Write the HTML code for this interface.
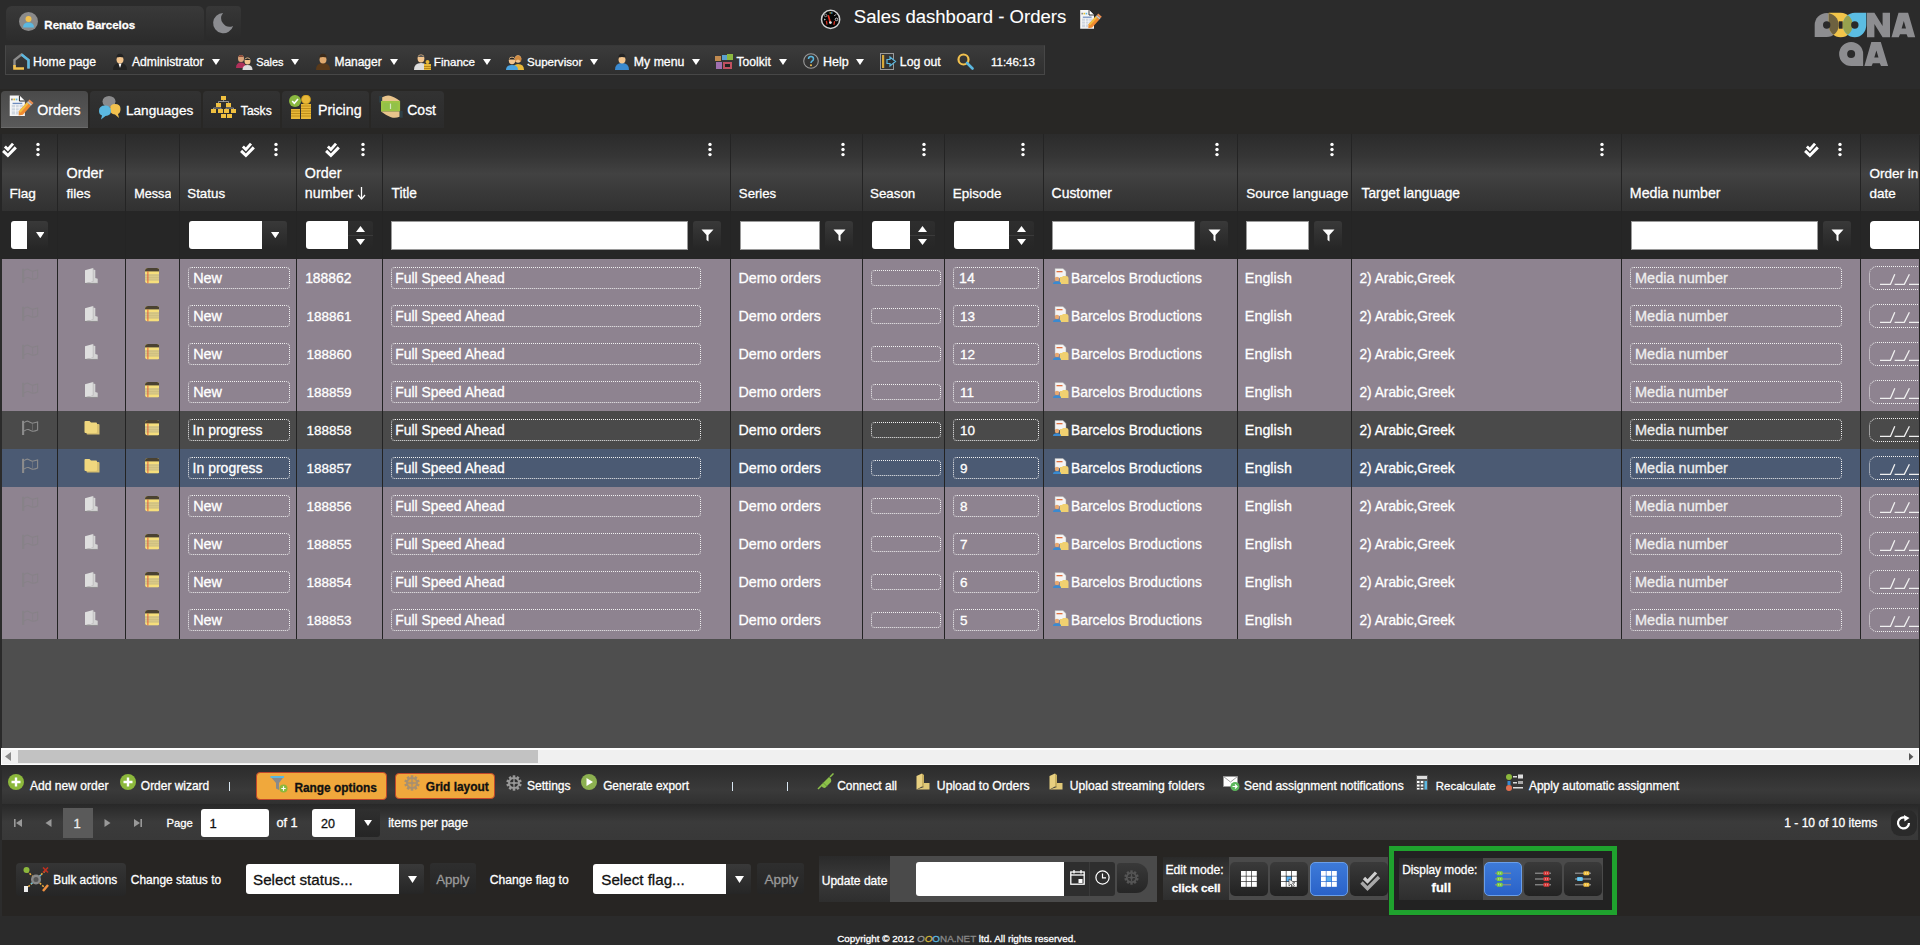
<!DOCTYPE html><html><head><meta charset="utf-8"><style>
*{margin:0;padding:0;box-sizing:border-box}
html,body{width:1920px;height:945px;overflow:hidden;background:#2b2b2b;font-family:"Liberation Sans",sans-serif}
.a{position:absolute}
.t{position:absolute;white-space:nowrap;line-height:1;-webkit-text-stroke:0.3px currentColor}
</style></head><body><div class="a" style="left:6px;top:6px;width:198px;height:35px;border-radius:6px 6px 3px 3px;background:linear-gradient(#393939,#2c2c2c)"></div>
<svg class="a" style="left:19px;top:12px" width="19" height="19" viewBox="0 0 19 19"><circle cx="9.5" cy="9.5" r="9.5" fill="#8a8a8a"/><circle cx="9.5" cy="7" r="3" fill="#f2c14e"/><path d="M4 15.5 Q4 10.5 9.5 10.5 Q15 10.5 15 15.5 Z" fill="#5bb8e0"/></svg>
<div class="t" style="left:44.37px;top:20.00px;font-size:11.529px;color:#fff;font-weight:bold;">Renato Barcelos</div>
<div class="a" style="left:206px;top:6px;width:35px;height:35px;border-radius:4px;background:linear-gradient(#373737,#2a2a2a)"></div>
<svg class="a" style="left:206px;top:6px" width="35" height="35" viewBox="0 0 35 35"><path d="M17.1 6.9 A10.2 10.2 0 1 0 27.1 20 A8.5 8.5 0 0 1 17.1 6.9 Z" fill="#8b8c90"/></svg>
<svg class="a" style="left:815px;top:5px" width="30" height="30" viewBox="0 0 30 30"><circle cx="15.6" cy="14.4" r="9.1" fill="#060606" stroke="#d2d2d2" stroke-width="1.5"/><path d="M13.2 10.3 L15.2 17.1" stroke="#ee3322" stroke-width="1.7"/><circle cx="15.4" cy="17.6" r="1.4" fill="#eaeaea"/><path d="M11.4 15.8 L12 19.6 M19.6 16.2 L18.9 19.8" stroke="#d83020" stroke-width="1.3"/><circle cx="10.6" cy="10.4" r="1.3" fill="none" stroke="#aaa" stroke-width=".8"/><path d="M19.3 11 L21 9.3" stroke="#ccc" stroke-width="1"/><circle cx="21.5" cy="14.4" r="1.3" fill="none" stroke="#ccc" stroke-width="1"/><path d="M9 13.5 L11 14.5 L9 15.5Z" fill="#bbb"/><rect x="14.6" y="7.2" width="1.2" height="1.5" fill="#c8a838"/><rect x="16.2" y="7.2" width="1.2" height="1.5" fill="#5bb8e0"/></svg>
<div class="t" style="left:853.85px;top:8.00px;font-size:18.557px;color:#fff;-webkit-text-stroke:0.1px #fff;">Sales dashboard - Orders</div>
<svg class="a" style="left:1075px;top:5px" width="30" height="30" viewBox="0 0 30 30"><path d="M5.2 5.1 H14 L19 10 V23.7 H5.2 Z" fill="#f6f6f6"/><path d="M14 5.1 V10 H19" fill="#fff" stroke="#222" stroke-width=".9"/><rect x="6.4" y="7.8" width="1.6" height="1.6" fill="#888"/><rect x="8.5" y="7.8" width="1.6" height="1.6" fill="#e8c030"/><rect x="10.6" y="7.8" width="1.6" height="1.6" fill="#5bb8e0"/><rect x="7.8" y="11.6" width="8.8" height="1.2" fill="#4a70b0" opacity=".8"/><rect x="7" y="13.5" width="10.5" height="8.8" fill="#cfd6e0"/><path d="M7 16.2H17.5M7 19H17.5M10.5 13.5V22.3M13.8 13.5V22.3" stroke="#fafafa" stroke-width=".7"/><path d="M13.6 19.3 L20.8 11.2 L24.4 14.4 L17.2 22.5 L13.3 23.2 Z" fill="#f08a30"/><path d="M13.6 19.3 L20.8 11.2 L22.3 12.5 L15 20.6Z" fill="#f2c040"/><path d="M20.8 11.2 L22 9.9 L25.6 13.1 L24.4 14.4Z" fill="#c8c8c8"/><path d="M22 9.9 L23.2 8.6 L26.8 11.8 L25.6 13.1Z" fill="#f09050"/></svg>
<svg class="a" style="left:1800px;top:5px" width="120" height="70" viewBox="0 0 120 70"><defs>
<clipPath id="cg"><path d="M14.7,20 A12,12 0 0 1 26.7,8 A12,12 0 0 1 38.7,20 A12,12 0 0 1 26.7,32 L14.7,32 Z"/></clipPath>
<clipPath id="cb"><path d="M54.8,8 L66.3,8 L66.3,20 A11.5 12 0 0 1 54.8,32 A12 12 0 0 1 42.8,20 A12 12 0 0 1 54.8,8 Z"/></clipPath>
</defs>
<g fill="#8d8d90">
<path d="M14.7,20 A12,12 0 0 1 26.7,8 A12,12 0 0 1 38.7,20 A12,12 0 0 1 26.7,32 L14.7,32 Z"/>
<path d="M67,7.8 H74.4 L82.6,21 V7.8 H90 V32.2 H82.6 L74.4,19 V32.2 H67 Z"/>
<path d="M91.5,32.2 L98.5,7.8 H108.1 L115.2,32.2 H107.8 L106.6,29.3 H100 L98.8,32.2 Z M101.6,23.5 H106 L103.8,16 Z"/>
<path d="M51.15,37 A12 12 0 0 1 63.15,49 L63.15,61.1 L51.15,61.1 A12 12 0 0 1 39.15,49 A12 12 0 0 1 51.15,37Z"/>
<path d="M64.4,61.1 L71.3,37 H80.8 L88.1,61.1 H81 L79.8,58.2 H72.8 L71.6,61.1 Z M74.3,52.6 H78.5 L76.4,45.5 Z"/>
</g>
<path id="yo" d="M28.7,7.8 L40.7,7.8 A12 12.2 0 0 1 52.7,20 A12 12.2 0 0 1 40.7,32.2 A12 12.2 0 0 1 28.7,20 Z" fill="#f2c54a"/>
<path d="M54.8,7.8 L66.3,7.8 L66.3,20 A11.5 12.2 0 0 1 54.8,32.2 A12 12.2 0 0 1 42.8,20 A12 12.2 0 0 1 54.8,7.8 Z" fill="#5bbde3"/>
<g clip-path="url(#cg)"><path d="M28.7,7.8 L40.7,7.8 A12 12.2 0 0 1 52.7,20 A12 12.2 0 0 1 40.7,32.2 A12 12.2 0 0 1 28.7,20 Z" fill="#6d6140"/></g>
<g clip-path="url(#cb)"><path d="M28.7,7.8 L40.7,7.8 A12 12.2 0 0 1 52.7,20 A12 12.2 0 0 1 40.7,32.2 A12 12.2 0 0 1 28.7,20 Z" fill="#97a24e"/></g>
<circle cx="26.7" cy="20" r="3.7" fill="#2a2a2a"/>
<rect x="38.8" y="16.3" width="3.8" height="7.4" fill="#2a2a2a"/>
<circle cx="54.8" cy="20" r="3.7" fill="#2a2a2a"/>
<circle cx="51.15" cy="49" r="4" fill="#2a2a2a"/>
</svg>
<div class="a" style="left:5px;top:45px;width:1040px;height:30px;background:linear-gradient(#3b3b3b,#2f2f2f);border:1px solid #474747;border-top-color:#383838"></div>
<svg class="a" style="left:13px;top:53px" width="17" height="17" viewBox="0 0 17 17"><path d="M1.5 15.5 V7 L8.5 1.5 L15.5 7 V15.5" fill="none" stroke="#8c8c8c" stroke-width="2.4"/><path d="M8.5 1.5 L15.5 7 V15.5" fill="none" stroke="#5bb8e0" stroke-width="2.4"/><path d="M1.5 12 V15.5 H11" fill="none" stroke="#f2c14e" stroke-width="2.6"/></svg>
<div class="t" style="left:33.00px;top:56.00px;font-size:12.197px;color:#fff;">Home page</div>
<svg class="a" style="left:112px;top:53px" width="16" height="17" viewBox="0 0 16 17"><path d="M1 17 Q1 10 8 10 Q15 10 15 17 Z" fill="#222"/><path d="M6.5 10.5 L8 15 L9.5 10.5 Z" fill="#fff"/><ellipse cx="8" cy="6.3" rx="3.5" ry="4.3" fill="#f2c48d"/><path d="M4.3 6.5 Q3.8 0.8 8 0.8 Q12.2 0.8 11.7 6.5 L11.2 4.6 Q8 3.6 4.8 4.6 Z" fill="#222"/></svg>
<div class="t" style="left:132.00px;top:56.00px;font-size:12.169px;color:#fff;">Administrator</div>
<svg class="a" style="left:212px;top:58.5px" width="8" height="6" viewBox="0 0 8 6"><path d="M0 0 H8 L4.0 6 Z" fill="#fff"/></svg>
<svg class="a" style="left:236px;top:54px" width="17" height="16" viewBox="0 0 17 16"><ellipse cx="5" cy="4.5" rx="3" ry="3.5" fill="#d9a37a"/><path d="M2 3 Q5 -1 8 3" fill="#8a4a3a"/><path d="M0 14 Q0 8.5 5 8.5 Q10 8.5 10 14Z" fill="#b0305a"/><ellipse cx="11.5" cy="7" rx="3" ry="3.5" fill="#f2c48d"/><path d="M8.5 6 Q11.5 2.5 14.5 6" fill="#222"/><path d="M6.5 16 Q6.5 11 11.5 11 Q16.5 11 16.5 16Z" fill="#ddd"/></svg>
<div class="t" style="left:256.15px;top:57.00px;font-size:10.915px;color:#fff;">Sales</div>
<svg class="a" style="left:291px;top:58.5px" width="8" height="6" viewBox="0 0 8 6"><path d="M0 0 H8 L4.0 6 Z" fill="#fff"/></svg>
<svg class="a" style="left:315px;top:53px" width="16" height="17" viewBox="0 0 16 17"><path d="M1 17 Q1 10 8 10 Q15 10 15 17 Z" fill="#5a3a1a"/><path d="M6.5 10.5 L8 15 L9.5 10.5 Z" fill="#5a3a1a"/><ellipse cx="8" cy="6.3" rx="3.5" ry="4.3" fill="#e0a96e"/><path d="M4.3 6.5 Q3.8 0.8 8 0.8 Q12.2 0.8 11.7 6.5 L11.2 4.6 Q8 3.6 4.8 4.6 Z" fill="#3a2a1a"/></svg>
<div class="t" style="left:334.43px;top:57.00px;font-size:11.971px;color:#fff;">Manager</div>
<svg class="a" style="left:390px;top:58.5px" width="8" height="6" viewBox="0 0 8 6"><path d="M0 0 H8 L4.0 6 Z" fill="#fff"/></svg>
<svg class="a" style="left:414px;top:53px" width="17" height="17" viewBox="0 0 17 17"><ellipse cx="7" cy="5.5" rx="3.4" ry="4" fill="#f2c48d"/><path d="M3.6 4 Q7 0 10.4 4" fill="#555"/><path d="M0 17 Q0 10 7 10 Q11 10 12 12 V17Z" fill="#ddd"/><rect x="10" y="11" width="7" height="6" fill="#e8b838"/><rect x="10" y="13" width="7" height="1" fill="#b88818"/><rect x="10" y="15" width="7" height="1" fill="#b88818"/><circle cx="13.5" cy="9" r="2" fill="#e8b838"/></svg>
<div class="t" style="left:433.86px;top:57.00px;font-size:11.580px;color:#fff;">Finance</div>
<svg class="a" style="left:483px;top:58.5px" width="8" height="6" viewBox="0 0 8 6"><path d="M0 0 H8 L4.0 6 Z" fill="#fff"/></svg>
<svg class="a" style="left:506px;top:54px" width="18" height="16" viewBox="0 0 18 16"><ellipse cx="12" cy="5" rx="3.2" ry="3.8" fill="#f2c48d"/><path d="M8.5 4 Q12 -1 15.5 4 L15 8 Q12 3 9 8Z" fill="#d08a40"/><path d="M7 16 Q7 10 12 10 Q18 10 18 16Z" fill="#e8b838"/><ellipse cx="6" cy="6.5" rx="3.2" ry="3.8" fill="#f2c48d"/><path d="M2.8 5.5 Q6 1.5 9.2 5.5" fill="#222"/><path d="M0 16 Q0 11 6 11 Q12 11 12 16Z" fill="#4aa3df"/></svg>
<div class="t" style="left:527.00px;top:57.00px;font-size:11.579px;color:#fff;">Supervisor</div>
<svg class="a" style="left:590px;top:58.5px" width="8" height="6" viewBox="0 0 8 6"><path d="M0 0 H8 L4.0 6 Z" fill="#fff"/></svg>
<svg class="a" style="left:614px;top:53px" width="16" height="17" viewBox="0 0 16 17"><path d="M1 17 Q1 10 8 10 Q15 10 15 17 Z" fill="#3a8ad0"/><path d="M6.5 10.5 L8 15 L9.5 10.5 Z" fill="#3a8ad0"/><ellipse cx="8" cy="6.3" rx="3.5" ry="4.3" fill="#f2c48d"/><path d="M4.3 6.5 Q3.8 0.8 8 0.8 Q12.2 0.8 11.7 6.5 L11.2 4.6 Q8 3.6 4.8 4.6 Z" fill="#222"/></svg>
<div class="t" style="left:633.87px;top:56.00px;font-size:12.292px;color:#fff;">My menu</div>
<svg class="a" style="left:692px;top:58.5px" width="8" height="6" viewBox="0 0 8 6"><path d="M0 0 H8 L4.0 6 Z" fill="#fff"/></svg>
<svg class="a" style="left:715px;top:54px" width="18" height="16" viewBox="0 0 18 16"><rect x="0" y="2" width="6" height="5" fill="#c08a50"/><rect x="7" y="1" width="5" height="5" fill="#5aa0d0"/><rect x="12" y="0" width="6" height="6" fill="#8ab840"/><rect x="1" y="8" width="6" height="7" fill="#a070b0"/><rect x="8" y="8" width="9" height="7" fill="#c05060"/><rect x="10" y="10" width="5" height="3" fill="#222"/></svg>
<div class="t" style="left:736.58px;top:56.00px;font-size:12.091px;color:#fff;">Toolkit</div>
<svg class="a" style="left:779px;top:58.5px" width="8" height="6" viewBox="0 0 8 6"><path d="M0 0 H8 L4.0 6 Z" fill="#fff"/></svg>
<svg class="a" style="left:803px;top:53px" width="16" height="16" viewBox="0 0 16 16"><circle cx="8" cy="8" r="7.3" fill="none" stroke="#9a9a9a" stroke-width="1.1"/><path d="M5.5 6 Q5.5 3.5 8 3.5 Q10.5 3.5 10.5 6 Q10.5 7.5 8.8 8.3 Q8 8.8 8 10" fill="none" stroke="#5bb8e0" stroke-width="1.5"/><circle cx="8" cy="12.3" r="1" fill="#f2c14e"/></svg>
<div class="t" style="left:823.00px;top:56.00px;font-size:12.522px;color:#fff;">Help</div>
<svg class="a" style="left:856px;top:58.5px" width="8" height="6" viewBox="0 0 8 6"><path d="M0 0 H8 L4.0 6 Z" fill="#fff"/></svg>
<svg class="a" style="left:880px;top:53px" width="17" height="17" viewBox="0 0 17 17"><rect x="0.5" y="0.5" width="13" height="16" fill="none" stroke="#9a9a9a" stroke-width="1"/><rect x="2" y="2" width="2.2" height="13" fill="#d8a838"/><path d="M7 6.5 H10 V4 L15.5 8.5 L10 13 V10.5 H7 Z" fill="#2a2a2a" stroke="#5bb8e0" stroke-width="1.2"/></svg>
<div class="t" style="left:899.87px;top:56.00px;font-size:12.253px;color:#fff;">Log out</div>
<svg class="a" style="left:957px;top:53px" width="17" height="17" viewBox="0 0 17 17"><circle cx="6.5" cy="6.5" r="5" fill="none" stroke="#f2c14e" stroke-width="2.2"/><path d="M10 10 L15.5 15.5" stroke="#5bb8e0" stroke-width="2.6" stroke-linecap="round"/></svg>
<div class="t" style="left:991.00px;top:57.00px;font-size:11.486px;color:#fff;">11:46:13</div>
<div class="a" style="left:0px;top:89px;width:1920px;height:46px;background:#282725"></div>
<div class="a" style="left:1px;top:91px;width:87.2px;height:37px;border-radius:4px 4px 0 0;background:linear-gradient(#4a4a4a,#5a5a5a)"></div>
<div class="a" style="left:1px;top:127.2px;width:87.2px;height:1.3px;background:#6a6a6a"></div>
<div class="a" style="left:90px;top:91px;width:111px;height:36.5px;border-radius:4px 4px 0 0;background:linear-gradient(#323232,#2b2b2b)"></div>
<div class="a" style="left:203px;top:91px;width:77px;height:36.5px;border-radius:4px 4px 0 0;background:linear-gradient(#323232,#2b2b2b)"></div>
<div class="a" style="left:282px;top:91px;width:87px;height:36.5px;border-radius:4px 4px 0 0;background:linear-gradient(#323232,#2b2b2b)"></div>
<div class="a" style="left:371px;top:91px;width:73px;height:36.5px;border-radius:4px 4px 0 0;background:linear-gradient(#323232,#2b2b2b)"></div>
<svg class="a" style="left:3.6px;top:90px" width="33" height="33" viewBox="0 0 30 30"><path d="M5.2 5.1 H14 L19 10 V23.7 H5.2 Z" fill="#f6f6f6"/><path d="M14 5.1 V10 H19" fill="#fff" stroke="#222" stroke-width=".9"/><rect x="6.4" y="7.8" width="1.6" height="1.6" fill="#888"/><rect x="8.5" y="7.8" width="1.6" height="1.6" fill="#e8c030"/><rect x="10.6" y="7.8" width="1.6" height="1.6" fill="#5bb8e0"/><rect x="7.8" y="11.6" width="8.8" height="1.2" fill="#4a70b0" opacity=".8"/><rect x="7" y="13.5" width="10.5" height="8.8" fill="#cfd6e0"/><path d="M7 16.2H17.5M7 19H17.5M10.5 13.5V22.3M13.8 13.5V22.3" stroke="#fafafa" stroke-width=".7"/><path d="M13.6 19.3 L20.8 11.2 L24.4 14.4 L17.2 22.5 L13.3 23.2 Z" fill="#f08a30"/><path d="M13.6 19.3 L20.8 11.2 L22.3 12.5 L15 20.6Z" fill="#f2c040"/><path d="M20.8 11.2 L22 9.9 L25.6 13.1 L24.4 14.4Z" fill="#c8c8c8"/><path d="M22 9.9 L23.2 8.6 L26.8 11.8 L25.6 13.1Z" fill="#f09050"/></svg>
<div class="t" style="left:37.30px;top:103.00px;font-size:14.170px;color:#fff;">Orders</div>
<svg class="a" style="left:98px;top:95px" width="24" height="25" viewBox="0 0 24 25"><ellipse cx="11" cy="6.5" rx="6.5" ry="5.5" fill="#8a8a8c"/><path d="M12 14 Q12 9 17 9 Q22.5 9 22.5 14 Q22.5 18 20 19 L21 23 L17 19.5 Q12 19 12 14Z" fill="#f2c14e"/><path d="M1 16 Q1 10.5 7 10.5 Q13 10.5 13 16 Q13 20.5 7.5 21 L3 24.5 L4 20.5 Q1 19.5 1 16Z" fill="#5bb8e0"/></svg>
<div class="t" style="left:126.00px;top:104.00px;font-size:13.600px;color:#fff;">Languages</div>
<svg class="a" style="left:211px;top:96px" width="25" height="22" viewBox="0 0 25 22"><g fill="#f0c040"><rect x="10" y="0" width="5" height="4"/><rect x="5" y="7" width="5" height="4"/><rect x="15" y="7" width="5" height="4"/><rect x="0" y="13" width="5" height="4"/><rect x="7" y="13" width="5" height="4"/><rect x="13" y="13" width="5" height="4"/><rect x="20" y="13" width="5" height="4"/><rect x="10" y="18" width="5" height="4"/><rect x="16" y="18" width="5" height="4"/></g><path d="M12.5 4V5.5M7.5 5.5H17.5M7.5 5.5V7M17.5 5.5V7M2.5 12H10M2.5 12V13M10 12V13M15 12H22.5M15 12V13M22.5 12V13" stroke="#aaa" stroke-width=".8" fill="none"/></svg>
<div class="t" style="left:240.86px;top:105.00px;font-size:12.056px;color:#fff;">Tasks</div>
<svg class="a" style="left:289px;top:95px" width="23" height="24" viewBox="0 0 23 24"><g fill="#e8b838"><rect x="2" y="14" width="9" height="10"/><rect x="12" y="9" width="10" height="15"/></g><g stroke="#b88818" stroke-width=".9"><path d="M2 16H11M2 18.5H11M2 21H11M12 11H22M12 13.5H22M12 16H22M12 18.5H22M12 21H22"/></g><circle cx="6" cy="6" r="6" fill="#8ab840"/><path d="M3.2 6 L5.3 8.2 L9 4" stroke="#fff" stroke-width="1.6" fill="none"/><circle cx="17" cy="4.5" r="4.5" fill="#e8b838" stroke="#c89818" stroke-width=".8"/></svg>
<div class="t" style="left:318.00px;top:103.00px;font-size:14.280px;color:#fff;">Pricing</div>
<svg class="a" style="left:370px;top:88px" width="40" height="36" viewBox="0 0 40 36"><rect x="9.1" y="8" width="3.1" height="6.5" fill="#2e4048"/><path d="M12.2 9.2 Q17 6.8 20 7.8 Q24 8.8 30 13 H12.2 Z" fill="#e8c48c"/><rect x="11" y="13" width="19.1" height="10.6" fill="#9cc444"/><rect x="13.5" y="15" width="14" height="6.6" fill="#8cc04c" opacity=".6"/><path d="M20.5 15.6 V21" stroke="#d8e8c0" stroke-width="1.2"/><path d="M11 23.6 H29.7 V28.8 Q25 30.6 21 29.2 Q16 27.6 11 23.6 Z" fill="#e8c48c"/><rect x="29.7" y="22.9" width="3" height="6.8" fill="#2e4048"/></svg>
<div class="t" style="left:407.29px;top:104.00px;font-size:13.971px;color:#fff;">Cost</div>
<div class="a" style="left:0px;top:134px;width:1920px;height:77px;background:linear-gradient(#2b2b2b 0%,#363636 30%,#424242 52%,#3a3a3a 72%,#313131 100%)"></div>
<div class="a" style="left:0px;top:211px;width:1920px;height:48px;background:#262626"></div>
<div class="a" style="left:57px;top:134px;width:1px;height:125px;background:#242424"></div>
<div class="a" style="left:125px;top:134px;width:1px;height:125px;background:#242424"></div>
<div class="a" style="left:179px;top:134px;width:1px;height:125px;background:#242424"></div>
<div class="a" style="left:296px;top:134px;width:1px;height:125px;background:#242424"></div>
<div class="a" style="left:382px;top:134px;width:1px;height:125px;background:#242424"></div>
<div class="a" style="left:730px;top:134px;width:1px;height:125px;background:#242424"></div>
<div class="a" style="left:862px;top:134px;width:1px;height:125px;background:#242424"></div>
<div class="a" style="left:944px;top:134px;width:1px;height:125px;background:#242424"></div>
<div class="a" style="left:1043px;top:134px;width:1px;height:125px;background:#242424"></div>
<div class="a" style="left:1237px;top:134px;width:1px;height:125px;background:#242424"></div>
<div class="a" style="left:1351px;top:134px;width:1px;height:125px;background:#242424"></div>
<div class="a" style="left:1621px;top:134px;width:1px;height:125px;background:#242424"></div>
<div class="a" style="left:1860px;top:134px;width:1px;height:125px;background:#242424"></div>
<div class="a" style="left:0px;top:134px;width:1.5px;height:125px;background:#262626"></div>
<div class="t" style="left:9.44px;top:187.00px;font-size:13.640px;color:#fff;">Flag</div>
<div class="t" style="left:66.57px;top:166.00px;font-size:14.352px;color:#fff;">Order</div>
<div class="t" style="left:66.57px;top:187.00px;font-size:13.547px;color:#fff;">files</div>
<div class="a" style="left:134px;top:130px;width:37px;height:80px;overflow:hidden">
<div class="t" style="left:0.30px;top:58.00px;font-size:12.600px;color:#fff;">Message</div>
</div>
<div class="t" style="left:187.28px;top:187.00px;font-size:13.333px;color:#fff;">Status</div>
<div class="t" style="left:304.86px;top:166.00px;font-size:14.305px;color:#fff;">Order</div>
<div class="t" style="left:304.86px;top:186.00px;font-size:14.247px;color:#fff;">number</div>
<svg class="a" style="left:357px;top:187px" width="9" height="13" viewBox="0 0 9 13"><path d="M4.5 0 V11" stroke="#fff" stroke-width="1.3"/><path d="M1 8 L4.5 12 L8 8" stroke="#fff" stroke-width="1.3" fill="none"/></svg>
<div class="t" style="left:391.61px;top:187.00px;font-size:13.713px;color:#fff;">Title</div>
<div class="t" style="left:738.86px;top:187.00px;font-size:13.168px;color:#fff;">Series</div>
<div class="t" style="left:870.00px;top:187.00px;font-size:13.343px;color:#fff;">Season</div>
<div class="t" style="left:952.86px;top:187.00px;font-size:13.430px;color:#fff;">Episode</div>
<div class="t" style="left:1051.61px;top:187.00px;font-size:13.912px;color:#fff;">Customer</div>
<div class="a" style="left:1240px;top:170px;width:111px;height:40px;overflow:hidden">
<div class="t" style="left:6.30px;top:17.00px;font-size:13.500px;color:#fff;">Source language</div>
</div>
<div class="t" style="left:1361.61px;top:187.00px;font-size:13.716px;color:#fff;">Target language</div>
<div class="t" style="left:1629.85px;top:186.00px;font-size:14.197px;color:#fff;">Media number</div>
<div class="t" style="left:1869.50px;top:167.00px;font-size:13.500px;color:#fff;">Order in</div>
<div class="t" style="left:1869.50px;top:187.00px;font-size:13.500px;color:#fff;">date</div>
<svg class="a" style="left:-2.2px;top:138px" width="24" height="24" viewBox="0 0 24 24"><path d="M5.1 12.9 L9.9 17.5 L17.8 9.4" fill="none" stroke="#fff" stroke-width="3"/><path d="M6.9 8.4 L9.9 11.4 L15 5.6" fill="none" stroke="#fff" stroke-width="2.8"/></svg>
<svg class="a" style="left:236px;top:138px" width="24" height="24" viewBox="0 0 24 24"><path d="M5.1 12.9 L9.9 17.5 L17.8 9.4" fill="none" stroke="#fff" stroke-width="3"/><path d="M6.9 8.4 L9.9 11.4 L15 5.6" fill="none" stroke="#fff" stroke-width="2.8"/></svg>
<svg class="a" style="left:320.9px;top:138px" width="24" height="24" viewBox="0 0 24 24"><path d="M5.1 12.9 L9.9 17.5 L17.8 9.4" fill="none" stroke="#fff" stroke-width="3"/><path d="M6.9 8.4 L9.9 11.4 L15 5.6" fill="none" stroke="#fff" stroke-width="2.8"/></svg>
<svg class="a" style="left:1799.6px;top:138px" width="24" height="24" viewBox="0 0 24 24"><path d="M5.1 12.9 L9.9 17.5 L17.8 9.4" fill="none" stroke="#fff" stroke-width="3"/><path d="M6.9 8.4 L9.9 11.4 L15 5.6" fill="none" stroke="#fff" stroke-width="2.8"/></svg>
<svg class="a" style="left:35.5px;top:142px" width="4" height="15" viewBox="0 0 4 15"><circle cx="2" cy="2.4" r="1.7" fill="#fff"/><circle cx="2" cy="7.5" r="1.7" fill="#fff"/><circle cx="2" cy="12.6" r="1.7" fill="#fff"/></svg>
<svg class="a" style="left:274.4px;top:142px" width="4" height="15" viewBox="0 0 4 15"><circle cx="2" cy="2.4" r="1.7" fill="#fff"/><circle cx="2" cy="7.5" r="1.7" fill="#fff"/><circle cx="2" cy="12.6" r="1.7" fill="#fff"/></svg>
<svg class="a" style="left:360.6px;top:142px" width="4" height="15" viewBox="0 0 4 15"><circle cx="2" cy="2.4" r="1.7" fill="#fff"/><circle cx="2" cy="7.5" r="1.7" fill="#fff"/><circle cx="2" cy="12.6" r="1.7" fill="#fff"/></svg>
<svg class="a" style="left:708.4px;top:142px" width="4" height="15" viewBox="0 0 4 15"><circle cx="2" cy="2.4" r="1.7" fill="#fff"/><circle cx="2" cy="7.5" r="1.7" fill="#fff"/><circle cx="2" cy="12.6" r="1.7" fill="#fff"/></svg>
<svg class="a" style="left:840.5px;top:142px" width="4" height="15" viewBox="0 0 4 15"><circle cx="2" cy="2.4" r="1.7" fill="#fff"/><circle cx="2" cy="7.5" r="1.7" fill="#fff"/><circle cx="2" cy="12.6" r="1.7" fill="#fff"/></svg>
<svg class="a" style="left:922.4px;top:142px" width="4" height="15" viewBox="0 0 4 15"><circle cx="2" cy="2.4" r="1.7" fill="#fff"/><circle cx="2" cy="7.5" r="1.7" fill="#fff"/><circle cx="2" cy="12.6" r="1.7" fill="#fff"/></svg>
<svg class="a" style="left:1021.4px;top:142px" width="4" height="15" viewBox="0 0 4 15"><circle cx="2" cy="2.4" r="1.7" fill="#fff"/><circle cx="2" cy="7.5" r="1.7" fill="#fff"/><circle cx="2" cy="12.6" r="1.7" fill="#fff"/></svg>
<svg class="a" style="left:1215.3px;top:142px" width="4" height="15" viewBox="0 0 4 15"><circle cx="2" cy="2.4" r="1.7" fill="#fff"/><circle cx="2" cy="7.5" r="1.7" fill="#fff"/><circle cx="2" cy="12.6" r="1.7" fill="#fff"/></svg>
<svg class="a" style="left:1329.5px;top:142px" width="4" height="15" viewBox="0 0 4 15"><circle cx="2" cy="2.4" r="1.7" fill="#fff"/><circle cx="2" cy="7.5" r="1.7" fill="#fff"/><circle cx="2" cy="12.6" r="1.7" fill="#fff"/></svg>
<svg class="a" style="left:1599.6px;top:142px" width="4" height="15" viewBox="0 0 4 15"><circle cx="2" cy="2.4" r="1.7" fill="#fff"/><circle cx="2" cy="7.5" r="1.7" fill="#fff"/><circle cx="2" cy="12.6" r="1.7" fill="#fff"/></svg>
<svg class="a" style="left:1838.3px;top:142px" width="4" height="15" viewBox="0 0 4 15"><circle cx="2" cy="2.4" r="1.7" fill="#fff"/><circle cx="2" cy="7.5" r="1.7" fill="#fff"/><circle cx="2" cy="12.6" r="1.7" fill="#fff"/></svg>
<div class="a" style="left:10.7px;top:221px;width:16.3px;height:28px;background:#fff;border-radius:3px 0 0 3px"></div>
<div class="a" style="left:27px;top:221px;width:21px;height:28px;background:linear-gradient(#393939,#262626);border-radius:0 3px 3px 0"></div>
<svg class="a" style="left:35.6px;top:232px" width="8.6" height="6.2" viewBox="0 0 8.6 6.2"><path d="M0 0 H8.6 L4.3 6.2 Z" fill="#fff"/></svg>
<div class="a" style="left:189px;top:221px;width:73px;height:28px;background:#fff;border-radius:3px 0 0 3px"></div>
<div class="a" style="left:262px;top:221px;width:25px;height:28px;background:linear-gradient(#393939,#262626);border-radius:0 3px 3px 0"></div>
<svg class="a" style="left:270.8px;top:232px" width="8.6" height="6.2" viewBox="0 0 8.6 6.2"><path d="M0 0 H8.6 L4.3 6.2 Z" fill="#fff"/></svg>
<div class="a" style="left:306px;top:221px;width:42px;height:28px;background:#fff;border-radius:3px 0 0 3px"></div>
<div class="a" style="left:348px;top:221px;width:25px;height:28px;background:linear-gradient(#2e2e2e,#262626);border-radius:0 3px 3px 0"></div>
<div class="a" style="left:348px;top:235px;width:25px;height:1px;background:#3a3a3a"></div>
<svg class="a" style="left:356.0px;top:226px" width="9" height="6" viewBox="0 0 9 6"><path d="M0 6 H9 L4.5 0 Z" fill="#fff"/></svg>
<svg class="a" style="left:356.0px;top:238.5px" width="9" height="6" viewBox="0 0 9 6"><path d="M0 0 H9 L4.5 6 Z" fill="#fff"/></svg>
<div class="a" style="left:391px;top:220.5px;width:297px;height:29px;background:#fff;border:1px solid #9a9a9a"></div>
<div class="a" style="left:693px;top:221px;width:28px;height:28px;background:linear-gradient(#393939,#262626);border-radius:3px"></div>
<svg class="a" style="left:700.5px;top:229px" width="13" height="13" viewBox="0 0 13 13"><path d="M0.5 0.5 H12.5 L7.5 6 V12.5 L5.5 11 V6 Z" fill="#fff"/></svg>
<div class="a" style="left:739.6px;top:220.5px;width:80.0px;height:29px;background:#fff;border:1px solid #9a9a9a"></div>
<div class="a" style="left:825px;top:221px;width:28px;height:28px;background:linear-gradient(#393939,#262626);border-radius:3px"></div>
<svg class="a" style="left:832.5px;top:229px" width="13" height="13" viewBox="0 0 13 13"><path d="M0.5 0.5 H12.5 L7.5 6 V12.5 L5.5 11 V6 Z" fill="#fff"/></svg>
<div class="a" style="left:872px;top:221px;width:38px;height:28px;background:#fff;border-radius:3px 0 0 3px"></div>
<div class="a" style="left:910px;top:221px;width:25px;height:28px;background:linear-gradient(#2e2e2e,#262626);border-radius:0 3px 3px 0"></div>
<div class="a" style="left:910px;top:235px;width:25px;height:1px;background:#3a3a3a"></div>
<svg class="a" style="left:918.0px;top:226px" width="9" height="6" viewBox="0 0 9 6"><path d="M0 6 H9 L4.5 0 Z" fill="#fff"/></svg>
<svg class="a" style="left:918.0px;top:238.5px" width="9" height="6" viewBox="0 0 9 6"><path d="M0 0 H9 L4.5 6 Z" fill="#fff"/></svg>
<div class="a" style="left:953.6px;top:221px;width:55.39999999999998px;height:28px;background:#fff;border-radius:3px 0 0 3px"></div>
<div class="a" style="left:1009px;top:221px;width:25px;height:28px;background:linear-gradient(#2e2e2e,#262626);border-radius:0 3px 3px 0"></div>
<div class="a" style="left:1009px;top:235px;width:25px;height:1px;background:#3a3a3a"></div>
<svg class="a" style="left:1017.0px;top:226px" width="9" height="6" viewBox="0 0 9 6"><path d="M0 6 H9 L4.5 0 Z" fill="#fff"/></svg>
<svg class="a" style="left:1017.0px;top:238.5px" width="9" height="6" viewBox="0 0 9 6"><path d="M0 0 H9 L4.5 6 Z" fill="#fff"/></svg>
<div class="a" style="left:1052px;top:220.5px;width:143px;height:29px;background:#fff;border:1px solid #9a9a9a"></div>
<div class="a" style="left:1200px;top:221px;width:28px;height:28px;background:linear-gradient(#393939,#262626);border-radius:3px"></div>
<svg class="a" style="left:1207.5px;top:229px" width="13" height="13" viewBox="0 0 13 13"><path d="M0.5 0.5 H12.5 L7.5 6 V12.5 L5.5 11 V6 Z" fill="#fff"/></svg>
<div class="a" style="left:1246.3px;top:220.5px;width:62.700000000000045px;height:29px;background:#fff;border:1px solid #9a9a9a"></div>
<div class="a" style="left:1314px;top:221px;width:28px;height:28px;background:linear-gradient(#393939,#262626);border-radius:3px"></div>
<svg class="a" style="left:1321.5px;top:229px" width="13" height="13" viewBox="0 0 13 13"><path d="M0.5 0.5 H12.5 L7.5 6 V12.5 L5.5 11 V6 Z" fill="#fff"/></svg>
<div class="a" style="left:1630.5px;top:220.5px;width:187.0999999999999px;height:29px;background:#fff;border:1px solid #9a9a9a"></div>
<div class="a" style="left:1823px;top:221px;width:28px;height:28px;background:linear-gradient(#393939,#262626);border-radius:3px"></div>
<svg class="a" style="left:1830.5px;top:229px" width="13" height="13" viewBox="0 0 13 13"><path d="M0.5 0.5 H12.5 L7.5 6 V12.5 L5.5 11 V6 Z" fill="#fff"/></svg>
<div class="a" style="left:1869.5px;top:221px;width:60px;height:28px;background:#fff;border-radius:4px 0 0 4px"></div>
<div class="a" style="left:1.5px;top:259px;width:1918px;height:38px;background:#8e8390"></div>
<div class="a" style="left:57px;top:259px;width:1px;height:38px;background:#232323"></div>
<div class="a" style="left:125px;top:259px;width:1px;height:38px;background:#232323"></div>
<div class="a" style="left:179px;top:259px;width:1px;height:38px;background:#232323"></div>
<div class="a" style="left:296px;top:259px;width:1px;height:38px;background:#232323"></div>
<div class="a" style="left:382px;top:259px;width:1px;height:38px;background:#232323"></div>
<div class="a" style="left:730px;top:259px;width:1px;height:38px;background:#232323"></div>
<div class="a" style="left:862px;top:259px;width:1px;height:38px;background:#232323"></div>
<div class="a" style="left:944px;top:259px;width:1px;height:38px;background:#232323"></div>
<div class="a" style="left:1043px;top:259px;width:1px;height:38px;background:#232323"></div>
<div class="a" style="left:1237px;top:259px;width:1px;height:38px;background:#232323"></div>
<div class="a" style="left:1351px;top:259px;width:1px;height:38px;background:#232323"></div>
<div class="a" style="left:1621px;top:259px;width:1px;height:38px;background:#232323"></div>
<div class="a" style="left:1860px;top:259px;width:1px;height:38px;background:#232323"></div>
<svg class="a" style="left:14px;top:262px" width="32" height="28" viewBox="0 0 32 28"><path d="M9.1 6.8 V21" stroke="#878288" stroke-width="2.1"/><path d="M10.2 8.6 Q12.7 6.6 14.5 7.4 Q16.5 8.5 18.4 9.2 Q21 8.6 23.6 8 V16 Q21 17.4 18.4 17.2 Q16.5 16.6 14.5 15.6 Q12.7 15 10.2 17" fill="none" stroke="#878288" stroke-width="1.1"/><path d="M18.6 9.5 V16.5" stroke="#878288" stroke-width=".8"/></svg>
<svg class="a" style="left:80px;top:262px" width="24" height="24" viewBox="0 0 24 24"><path d="M5 8.3 L13.1 5.9 V19.6 L5 21.3 Z" fill="#dedede"/><path d="M13.1 7.6 L15.3 8 V16 L17.7 16.8 V21.5 H5 L13.1 19.6 Z" fill="#d4d4d4"/><path d="M13.1 5.9 V19.6" stroke="#b8b8b8" stroke-width=".6"/><path d="M5 21.4 H17.7" stroke="#6a6a6a" stroke-width=".5"/></svg>
<svg class="a" style="left:144.7px;top:268.1px" width="14.6" height="15.6" viewBox="0 0 14.6 15.6"><defs><clipPath id="nc0"><rect x="0" y="0" width="14.6" height="15.6" rx="3"/></clipPath></defs><g clip-path="url(#nc0)"><rect x="0" y="0" width="14.6" height="15.6" fill="#f6df7c"/><rect x="0" y="6" width="14.6" height="6.5" fill="#d9ca88"/><path d="M0 7.2H14.6M0 9.6H14.6M0 12H14.6" stroke="#c8b878" stroke-width=".6"/><rect x="0" y="0" width="14.6" height="3.4" fill="#4a4232"/><path d="M2.9 3.4V15.6" stroke="#e85030" stroke-width=".9"/></g></svg>
<div class="a" style="left:188px;top:267px;width:102px;height:22px;border:1.3px dotted #f2f2f2;border-radius:4px"></div>
<div class="t" style="left:193.14px;top:271.00px;font-size:14.418px;color:#fff;">New</div>
<div class="t" style="left:305.15px;top:272.00px;font-size:13.917px;color:#fff;">188862</div>
<div class="a" style="left:391px;top:267px;width:310px;height:22px;border:1.3px dotted #f2f2f2;border-radius:4px"></div>
<div class="t" style="left:395.29px;top:272.00px;font-size:13.860px;color:#fff;">Full Speed Ahead</div>
<div class="t" style="left:738.57px;top:271.00px;font-size:14.268px;color:#fff;">Demo orders</div>
<div class="a" style="left:871px;top:270px;width:70px;height:16px;border:1.3px dotted #f2f2f2;border-radius:4px"></div>
<div class="a" style="left:953px;top:267px;width:86px;height:22px;border:1.3px dotted #f2f2f2;border-radius:4px"></div>
<div class="t" style="left:959.00px;top:271.00px;font-size:14.226px;color:#fff;">14</div>
<svg class="a" style="left:1053px;top:268px" width="16" height="16" viewBox="0 0 16 16"><path d="M2 0.5 H10 L13 3.5 V10 H2 Z" fill="#f4f4f4" stroke="#aaa" stroke-width=".5"/><rect x="3.5" y="3" width="6" height="1.3" fill="#e07040"/><path d="M7 9 H9 L10 8 H13 Q15.5 8 15.5 10 V16 H7 Z" fill="#f0d070"/><circle cx="4" cy="11" r="2.2" fill="#e8a870"/><path d="M0 16 Q0 13.3 4 13.3 Q8 13.3 8 16Z" fill="#3a8ad0"/></svg>
<div class="t" style="left:1071.09px;top:272.00px;font-size:13.851px;color:#fff;">Barcelos Broductions</div>
<div class="t" style="left:1244.86px;top:271.00px;font-size:14.336px;color:#fff;">English</div>
<div class="t" style="left:1359.43px;top:272.00px;font-size:13.728px;color:#fff;">2) Arabic,Greek</div>
<div class="a" style="left:1630px;top:267px;width:212px;height:22px;border:1.3px dotted #f2f2f2;border-radius:4px"></div>
<div class="t" style="left:1635.00px;top:271.00px;font-size:14.530px;color:#eee;">Media number</div>
<div class="a" style="left:1869px;top:265.5px;width:80px;height:24px;border:1.3px dotted #f2f2f2;border-radius:8px"></div>
<svg class="a" style="left:1875px;top:271px" width="45" height="16" viewBox="0 0 45 16"><path d="M5 13.4 H15.4 L19.8 3.3 M19.6 13.4 H29.3 L34.4 3.3 M34 13.4 H45" fill="none" stroke="#f0f0f0" stroke-width="1.3" stroke-linejoin="round"/></svg>
<div class="a" style="left:1.5px;top:297px;width:1918px;height:38px;background:#8e8390"></div>
<div class="a" style="left:57px;top:297px;width:1px;height:38px;background:#232323"></div>
<div class="a" style="left:125px;top:297px;width:1px;height:38px;background:#232323"></div>
<div class="a" style="left:179px;top:297px;width:1px;height:38px;background:#232323"></div>
<div class="a" style="left:296px;top:297px;width:1px;height:38px;background:#232323"></div>
<div class="a" style="left:382px;top:297px;width:1px;height:38px;background:#232323"></div>
<div class="a" style="left:730px;top:297px;width:1px;height:38px;background:#232323"></div>
<div class="a" style="left:862px;top:297px;width:1px;height:38px;background:#232323"></div>
<div class="a" style="left:944px;top:297px;width:1px;height:38px;background:#232323"></div>
<div class="a" style="left:1043px;top:297px;width:1px;height:38px;background:#232323"></div>
<div class="a" style="left:1237px;top:297px;width:1px;height:38px;background:#232323"></div>
<div class="a" style="left:1351px;top:297px;width:1px;height:38px;background:#232323"></div>
<div class="a" style="left:1621px;top:297px;width:1px;height:38px;background:#232323"></div>
<div class="a" style="left:1860px;top:297px;width:1px;height:38px;background:#232323"></div>
<svg class="a" style="left:14px;top:300px" width="32" height="28" viewBox="0 0 32 28"><path d="M9.1 6.8 V21" stroke="#878288" stroke-width="2.1"/><path d="M10.2 8.6 Q12.7 6.6 14.5 7.4 Q16.5 8.5 18.4 9.2 Q21 8.6 23.6 8 V16 Q21 17.4 18.4 17.2 Q16.5 16.6 14.5 15.6 Q12.7 15 10.2 17" fill="none" stroke="#878288" stroke-width="1.1"/><path d="M18.6 9.5 V16.5" stroke="#878288" stroke-width=".8"/></svg>
<svg class="a" style="left:80px;top:300px" width="24" height="24" viewBox="0 0 24 24"><path d="M5 8.3 L13.1 5.9 V19.6 L5 21.3 Z" fill="#dedede"/><path d="M13.1 7.6 L15.3 8 V16 L17.7 16.8 V21.5 H5 L13.1 19.6 Z" fill="#d4d4d4"/><path d="M13.1 5.9 V19.6" stroke="#b8b8b8" stroke-width=".6"/><path d="M5 21.4 H17.7" stroke="#6a6a6a" stroke-width=".5"/></svg>
<svg class="a" style="left:144.7px;top:306.1px" width="14.6" height="15.6" viewBox="0 0 14.6 15.6"><defs><clipPath id="nc1"><rect x="0" y="0" width="14.6" height="15.6" rx="3"/></clipPath></defs><g clip-path="url(#nc1)"><rect x="0" y="0" width="14.6" height="15.6" fill="#f6df7c"/><rect x="0" y="6" width="14.6" height="6.5" fill="#d9ca88"/><path d="M0 7.2H14.6M0 9.6H14.6M0 12H14.6" stroke="#c8b878" stroke-width=".6"/><rect x="0" y="0" width="14.6" height="3.4" fill="#4a4232"/><path d="M2.9 3.4V15.6" stroke="#e85030" stroke-width=".9"/></g></svg>
<div class="a" style="left:188px;top:305px;width:102px;height:22px;border:1.3px dotted #f2f2f2;border-radius:4px"></div>
<div class="t" style="left:193.14px;top:309.00px;font-size:14.418px;color:#fff;">New</div>
<div class="t" style="left:306.50px;top:310.00px;font-size:13.500px;color:#fff;">188861</div>
<div class="a" style="left:391px;top:305px;width:310px;height:22px;border:1.3px dotted #f2f2f2;border-radius:4px"></div>
<div class="t" style="left:395.29px;top:310.00px;font-size:13.860px;color:#fff;">Full Speed Ahead</div>
<div class="t" style="left:738.57px;top:309.00px;font-size:14.268px;color:#fff;">Demo orders</div>
<div class="a" style="left:871px;top:308px;width:70px;height:16px;border:1.3px dotted #f2f2f2;border-radius:4px"></div>
<div class="a" style="left:953px;top:305px;width:86px;height:22px;border:1.3px dotted #f2f2f2;border-radius:4px"></div>
<div class="t" style="left:960.00px;top:310.00px;font-size:13.500px;color:#fff;">13</div>
<svg class="a" style="left:1053px;top:306px" width="16" height="16" viewBox="0 0 16 16"><path d="M2 0.5 H10 L13 3.5 V10 H2 Z" fill="#f4f4f4" stroke="#aaa" stroke-width=".5"/><rect x="3.5" y="3" width="6" height="1.3" fill="#e07040"/><path d="M7 9 H9 L10 8 H13 Q15.5 8 15.5 10 V16 H7 Z" fill="#f0d070"/><circle cx="4" cy="11" r="2.2" fill="#e8a870"/><path d="M0 16 Q0 13.3 4 13.3 Q8 13.3 8 16Z" fill="#3a8ad0"/></svg>
<div class="t" style="left:1071.09px;top:310.00px;font-size:13.851px;color:#fff;">Barcelos Broductions</div>
<div class="t" style="left:1244.86px;top:309.00px;font-size:14.336px;color:#fff;">English</div>
<div class="t" style="left:1359.43px;top:310.00px;font-size:13.728px;color:#fff;">2) Arabic,Greek</div>
<div class="a" style="left:1630px;top:305px;width:212px;height:22px;border:1.3px dotted #f2f2f2;border-radius:4px"></div>
<div class="t" style="left:1635.00px;top:309.00px;font-size:14.530px;color:#eee;">Media number</div>
<div class="a" style="left:1869px;top:303.5px;width:80px;height:24px;border:1.3px dotted #f2f2f2;border-radius:8px"></div>
<svg class="a" style="left:1875px;top:309px" width="45" height="16" viewBox="0 0 45 16"><path d="M5 13.4 H15.4 L19.8 3.3 M19.6 13.4 H29.3 L34.4 3.3 M34 13.4 H45" fill="none" stroke="#f0f0f0" stroke-width="1.3" stroke-linejoin="round"/></svg>
<div class="a" style="left:1.5px;top:335px;width:1918px;height:38px;background:#8e8390"></div>
<div class="a" style="left:57px;top:335px;width:1px;height:38px;background:#232323"></div>
<div class="a" style="left:125px;top:335px;width:1px;height:38px;background:#232323"></div>
<div class="a" style="left:179px;top:335px;width:1px;height:38px;background:#232323"></div>
<div class="a" style="left:296px;top:335px;width:1px;height:38px;background:#232323"></div>
<div class="a" style="left:382px;top:335px;width:1px;height:38px;background:#232323"></div>
<div class="a" style="left:730px;top:335px;width:1px;height:38px;background:#232323"></div>
<div class="a" style="left:862px;top:335px;width:1px;height:38px;background:#232323"></div>
<div class="a" style="left:944px;top:335px;width:1px;height:38px;background:#232323"></div>
<div class="a" style="left:1043px;top:335px;width:1px;height:38px;background:#232323"></div>
<div class="a" style="left:1237px;top:335px;width:1px;height:38px;background:#232323"></div>
<div class="a" style="left:1351px;top:335px;width:1px;height:38px;background:#232323"></div>
<div class="a" style="left:1621px;top:335px;width:1px;height:38px;background:#232323"></div>
<div class="a" style="left:1860px;top:335px;width:1px;height:38px;background:#232323"></div>
<svg class="a" style="left:14px;top:338px" width="32" height="28" viewBox="0 0 32 28"><path d="M9.1 6.8 V21" stroke="#878288" stroke-width="2.1"/><path d="M10.2 8.6 Q12.7 6.6 14.5 7.4 Q16.5 8.5 18.4 9.2 Q21 8.6 23.6 8 V16 Q21 17.4 18.4 17.2 Q16.5 16.6 14.5 15.6 Q12.7 15 10.2 17" fill="none" stroke="#878288" stroke-width="1.1"/><path d="M18.6 9.5 V16.5" stroke="#878288" stroke-width=".8"/></svg>
<svg class="a" style="left:80px;top:338px" width="24" height="24" viewBox="0 0 24 24"><path d="M5 8.3 L13.1 5.9 V19.6 L5 21.3 Z" fill="#dedede"/><path d="M13.1 7.6 L15.3 8 V16 L17.7 16.8 V21.5 H5 L13.1 19.6 Z" fill="#d4d4d4"/><path d="M13.1 5.9 V19.6" stroke="#b8b8b8" stroke-width=".6"/><path d="M5 21.4 H17.7" stroke="#6a6a6a" stroke-width=".5"/></svg>
<svg class="a" style="left:144.7px;top:344.1px" width="14.6" height="15.6" viewBox="0 0 14.6 15.6"><defs><clipPath id="nc2"><rect x="0" y="0" width="14.6" height="15.6" rx="3"/></clipPath></defs><g clip-path="url(#nc2)"><rect x="0" y="0" width="14.6" height="15.6" fill="#f6df7c"/><rect x="0" y="6" width="14.6" height="6.5" fill="#d9ca88"/><path d="M0 7.2H14.6M0 9.6H14.6M0 12H14.6" stroke="#c8b878" stroke-width=".6"/><rect x="0" y="0" width="14.6" height="3.4" fill="#4a4232"/><path d="M2.9 3.4V15.6" stroke="#e85030" stroke-width=".9"/></g></svg>
<div class="a" style="left:188px;top:343px;width:102px;height:22px;border:1.3px dotted #f2f2f2;border-radius:4px"></div>
<div class="t" style="left:193.14px;top:347.00px;font-size:14.418px;color:#fff;">New</div>
<div class="t" style="left:306.50px;top:348.00px;font-size:13.500px;color:#fff;">188860</div>
<div class="a" style="left:391px;top:343px;width:310px;height:22px;border:1.3px dotted #f2f2f2;border-radius:4px"></div>
<div class="t" style="left:395.29px;top:348.00px;font-size:13.860px;color:#fff;">Full Speed Ahead</div>
<div class="t" style="left:738.57px;top:347.00px;font-size:14.268px;color:#fff;">Demo orders</div>
<div class="a" style="left:871px;top:346px;width:70px;height:16px;border:1.3px dotted #f2f2f2;border-radius:4px"></div>
<div class="a" style="left:953px;top:343px;width:86px;height:22px;border:1.3px dotted #f2f2f2;border-radius:4px"></div>
<div class="t" style="left:960.00px;top:348.00px;font-size:13.500px;color:#fff;">12</div>
<svg class="a" style="left:1053px;top:344px" width="16" height="16" viewBox="0 0 16 16"><path d="M2 0.5 H10 L13 3.5 V10 H2 Z" fill="#f4f4f4" stroke="#aaa" stroke-width=".5"/><rect x="3.5" y="3" width="6" height="1.3" fill="#e07040"/><path d="M7 9 H9 L10 8 H13 Q15.5 8 15.5 10 V16 H7 Z" fill="#f0d070"/><circle cx="4" cy="11" r="2.2" fill="#e8a870"/><path d="M0 16 Q0 13.3 4 13.3 Q8 13.3 8 16Z" fill="#3a8ad0"/></svg>
<div class="t" style="left:1071.09px;top:348.00px;font-size:13.851px;color:#fff;">Barcelos Broductions</div>
<div class="t" style="left:1244.86px;top:347.00px;font-size:14.336px;color:#fff;">English</div>
<div class="t" style="left:1359.43px;top:348.00px;font-size:13.728px;color:#fff;">2) Arabic,Greek</div>
<div class="a" style="left:1630px;top:343px;width:212px;height:22px;border:1.3px dotted #f2f2f2;border-radius:4px"></div>
<div class="t" style="left:1635.00px;top:347.00px;font-size:14.530px;color:#eee;">Media number</div>
<div class="a" style="left:1869px;top:341.5px;width:80px;height:24px;border:1.3px dotted #f2f2f2;border-radius:8px"></div>
<svg class="a" style="left:1875px;top:347px" width="45" height="16" viewBox="0 0 45 16"><path d="M5 13.4 H15.4 L19.8 3.3 M19.6 13.4 H29.3 L34.4 3.3 M34 13.4 H45" fill="none" stroke="#f0f0f0" stroke-width="1.3" stroke-linejoin="round"/></svg>
<div class="a" style="left:1.5px;top:373px;width:1918px;height:38px;background:#8e8390"></div>
<div class="a" style="left:57px;top:373px;width:1px;height:38px;background:#232323"></div>
<div class="a" style="left:125px;top:373px;width:1px;height:38px;background:#232323"></div>
<div class="a" style="left:179px;top:373px;width:1px;height:38px;background:#232323"></div>
<div class="a" style="left:296px;top:373px;width:1px;height:38px;background:#232323"></div>
<div class="a" style="left:382px;top:373px;width:1px;height:38px;background:#232323"></div>
<div class="a" style="left:730px;top:373px;width:1px;height:38px;background:#232323"></div>
<div class="a" style="left:862px;top:373px;width:1px;height:38px;background:#232323"></div>
<div class="a" style="left:944px;top:373px;width:1px;height:38px;background:#232323"></div>
<div class="a" style="left:1043px;top:373px;width:1px;height:38px;background:#232323"></div>
<div class="a" style="left:1237px;top:373px;width:1px;height:38px;background:#232323"></div>
<div class="a" style="left:1351px;top:373px;width:1px;height:38px;background:#232323"></div>
<div class="a" style="left:1621px;top:373px;width:1px;height:38px;background:#232323"></div>
<div class="a" style="left:1860px;top:373px;width:1px;height:38px;background:#232323"></div>
<svg class="a" style="left:14px;top:376px" width="32" height="28" viewBox="0 0 32 28"><path d="M9.1 6.8 V21" stroke="#878288" stroke-width="2.1"/><path d="M10.2 8.6 Q12.7 6.6 14.5 7.4 Q16.5 8.5 18.4 9.2 Q21 8.6 23.6 8 V16 Q21 17.4 18.4 17.2 Q16.5 16.6 14.5 15.6 Q12.7 15 10.2 17" fill="none" stroke="#878288" stroke-width="1.1"/><path d="M18.6 9.5 V16.5" stroke="#878288" stroke-width=".8"/></svg>
<svg class="a" style="left:80px;top:376px" width="24" height="24" viewBox="0 0 24 24"><path d="M5 8.3 L13.1 5.9 V19.6 L5 21.3 Z" fill="#dedede"/><path d="M13.1 7.6 L15.3 8 V16 L17.7 16.8 V21.5 H5 L13.1 19.6 Z" fill="#d4d4d4"/><path d="M13.1 5.9 V19.6" stroke="#b8b8b8" stroke-width=".6"/><path d="M5 21.4 H17.7" stroke="#6a6a6a" stroke-width=".5"/></svg>
<svg class="a" style="left:144.7px;top:382.1px" width="14.6" height="15.6" viewBox="0 0 14.6 15.6"><defs><clipPath id="nc3"><rect x="0" y="0" width="14.6" height="15.6" rx="3"/></clipPath></defs><g clip-path="url(#nc3)"><rect x="0" y="0" width="14.6" height="15.6" fill="#f6df7c"/><rect x="0" y="6" width="14.6" height="6.5" fill="#d9ca88"/><path d="M0 7.2H14.6M0 9.6H14.6M0 12H14.6" stroke="#c8b878" stroke-width=".6"/><rect x="0" y="0" width="14.6" height="3.4" fill="#4a4232"/><path d="M2.9 3.4V15.6" stroke="#e85030" stroke-width=".9"/></g></svg>
<div class="a" style="left:188px;top:381px;width:102px;height:22px;border:1.3px dotted #f2f2f2;border-radius:4px"></div>
<div class="t" style="left:193.14px;top:385.00px;font-size:14.418px;color:#fff;">New</div>
<div class="t" style="left:306.50px;top:386.00px;font-size:13.500px;color:#fff;">188859</div>
<div class="a" style="left:391px;top:381px;width:310px;height:22px;border:1.3px dotted #f2f2f2;border-radius:4px"></div>
<div class="t" style="left:395.29px;top:386.00px;font-size:13.860px;color:#fff;">Full Speed Ahead</div>
<div class="t" style="left:738.57px;top:385.00px;font-size:14.268px;color:#fff;">Demo orders</div>
<div class="a" style="left:871px;top:384px;width:70px;height:16px;border:1.3px dotted #f2f2f2;border-radius:4px"></div>
<div class="a" style="left:953px;top:381px;width:86px;height:22px;border:1.3px dotted #f2f2f2;border-radius:4px"></div>
<div class="t" style="left:960.00px;top:386.00px;font-size:13.500px;color:#fff;">11</div>
<svg class="a" style="left:1053px;top:382px" width="16" height="16" viewBox="0 0 16 16"><path d="M2 0.5 H10 L13 3.5 V10 H2 Z" fill="#f4f4f4" stroke="#aaa" stroke-width=".5"/><rect x="3.5" y="3" width="6" height="1.3" fill="#e07040"/><path d="M7 9 H9 L10 8 H13 Q15.5 8 15.5 10 V16 H7 Z" fill="#f0d070"/><circle cx="4" cy="11" r="2.2" fill="#e8a870"/><path d="M0 16 Q0 13.3 4 13.3 Q8 13.3 8 16Z" fill="#3a8ad0"/></svg>
<div class="t" style="left:1071.09px;top:386.00px;font-size:13.851px;color:#fff;">Barcelos Broductions</div>
<div class="t" style="left:1244.86px;top:385.00px;font-size:14.336px;color:#fff;">English</div>
<div class="t" style="left:1359.43px;top:386.00px;font-size:13.728px;color:#fff;">2) Arabic,Greek</div>
<div class="a" style="left:1630px;top:381px;width:212px;height:22px;border:1.3px dotted #f2f2f2;border-radius:4px"></div>
<div class="t" style="left:1635.00px;top:385.00px;font-size:14.530px;color:#eee;">Media number</div>
<div class="a" style="left:1869px;top:379.5px;width:80px;height:24px;border:1.3px dotted #f2f2f2;border-radius:8px"></div>
<svg class="a" style="left:1875px;top:385px" width="45" height="16" viewBox="0 0 45 16"><path d="M5 13.4 H15.4 L19.8 3.3 M19.6 13.4 H29.3 L34.4 3.3 M34 13.4 H45" fill="none" stroke="#f0f0f0" stroke-width="1.3" stroke-linejoin="round"/></svg>
<div class="a" style="left:1.5px;top:411px;width:1918px;height:38px;background:#4a4a4a"></div>
<div class="a" style="left:57px;top:411px;width:1px;height:38px;background:#232323"></div>
<div class="a" style="left:125px;top:411px;width:1px;height:38px;background:#232323"></div>
<div class="a" style="left:179px;top:411px;width:1px;height:38px;background:#232323"></div>
<div class="a" style="left:296px;top:411px;width:1px;height:38px;background:#232323"></div>
<div class="a" style="left:382px;top:411px;width:1px;height:38px;background:#232323"></div>
<div class="a" style="left:730px;top:411px;width:1px;height:38px;background:#232323"></div>
<div class="a" style="left:862px;top:411px;width:1px;height:38px;background:#232323"></div>
<div class="a" style="left:944px;top:411px;width:1px;height:38px;background:#232323"></div>
<div class="a" style="left:1043px;top:411px;width:1px;height:38px;background:#232323"></div>
<div class="a" style="left:1237px;top:411px;width:1px;height:38px;background:#232323"></div>
<div class="a" style="left:1351px;top:411px;width:1px;height:38px;background:#232323"></div>
<div class="a" style="left:1621px;top:411px;width:1px;height:38px;background:#232323"></div>
<div class="a" style="left:1860px;top:411px;width:1px;height:38px;background:#232323"></div>
<svg class="a" style="left:14px;top:414px" width="32" height="28" viewBox="0 0 32 28"><path d="M9.1 6.8 V21" stroke="#8c8c8c" stroke-width="2.1"/><path d="M10.2 8.6 Q12.7 6.6 14.5 7.4 Q16.5 8.5 18.4 9.2 Q21 8.6 23.6 8 V16 Q21 17.4 18.4 17.2 Q16.5 16.6 14.5 15.6 Q12.7 15 10.2 17" fill="none" stroke="#8c8c8c" stroke-width="1.1"/><path d="M18.6 9.5 V16.5" stroke="#8c8c8c" stroke-width=".7" opacity=".7"/></svg>
<svg class="a" style="left:84px;top:420.5px" width="16" height="14" viewBox="0 0 16 14"><path d="M2.5 3 H14.5 Q15.5 3 15.5 4 V13.5 H3.5 Q2.5 13.5 2.5 12.5Z" fill="#d8c070"/><path d="M0.5 1 Q0.5 0 1.5 0 H5.5 L7 1.5 H12 Q13 1.5 13 2.5 V11 Q13 12 12 12 H1.5 Q0.5 12 0.5 11 Z" fill="#f0d77e"/></svg>
<svg class="a" style="left:144.7px;top:420.1px" width="14.6" height="15.6" viewBox="0 0 14.6 15.6"><defs><clipPath id="nc4"><rect x="0" y="0" width="14.6" height="15.6" rx="3"/></clipPath></defs><g clip-path="url(#nc4)"><rect x="0" y="0" width="14.6" height="15.6" fill="#f6df7c"/><rect x="0" y="6" width="14.6" height="6.5" fill="#d9ca88"/><path d="M0 7.2H14.6M0 9.6H14.6M0 12H14.6" stroke="#c8b878" stroke-width=".6"/><rect x="0" y="0" width="14.6" height="3.4" fill="#4a4232"/><path d="M2.9 3.4V15.6" stroke="#e85030" stroke-width=".9"/></g></svg>
<div class="a" style="left:188px;top:419px;width:102px;height:22px;border:1.3px dotted #f2f2f2;border-radius:4px"></div>
<div class="t" style="left:192.58px;top:423.00px;font-size:14.008px;color:#fff;">In progress</div>
<div class="t" style="left:306.50px;top:424.00px;font-size:13.500px;color:#fff;">188858</div>
<div class="a" style="left:391px;top:419px;width:310px;height:22px;border:1.3px dotted #f2f2f2;border-radius:4px"></div>
<div class="t" style="left:395.29px;top:424.00px;font-size:13.860px;color:#fff;">Full Speed Ahead</div>
<div class="t" style="left:738.57px;top:423.00px;font-size:14.268px;color:#fff;">Demo orders</div>
<div class="a" style="left:871px;top:422px;width:70px;height:16px;border:1.3px dotted #f2f2f2;border-radius:4px"></div>
<div class="a" style="left:953px;top:419px;width:86px;height:22px;border:1.3px dotted #f2f2f2;border-radius:4px"></div>
<div class="t" style="left:960.00px;top:424.00px;font-size:13.500px;color:#fff;">10</div>
<svg class="a" style="left:1053px;top:420px" width="16" height="16" viewBox="0 0 16 16"><path d="M2 0.5 H10 L13 3.5 V10 H2 Z" fill="#f4f4f4" stroke="#aaa" stroke-width=".5"/><rect x="3.5" y="3" width="6" height="1.3" fill="#e07040"/><path d="M7 9 H9 L10 8 H13 Q15.5 8 15.5 10 V16 H7 Z" fill="#f0d070"/><circle cx="4" cy="11" r="2.2" fill="#e8a870"/><path d="M0 16 Q0 13.3 4 13.3 Q8 13.3 8 16Z" fill="#3a8ad0"/></svg>
<div class="t" style="left:1071.09px;top:424.00px;font-size:13.851px;color:#fff;">Barcelos Broductions</div>
<div class="t" style="left:1244.86px;top:423.00px;font-size:14.336px;color:#fff;">English</div>
<div class="t" style="left:1359.43px;top:424.00px;font-size:13.728px;color:#fff;">2) Arabic,Greek</div>
<div class="a" style="left:1630px;top:419px;width:212px;height:22px;border:1.3px dotted #f2f2f2;border-radius:4px"></div>
<div class="t" style="left:1635.00px;top:423.00px;font-size:14.530px;color:#eee;">Media number</div>
<div class="a" style="left:1869px;top:417.5px;width:80px;height:24px;border:1.3px dotted #f2f2f2;border-radius:8px"></div>
<svg class="a" style="left:1875px;top:423px" width="45" height="16" viewBox="0 0 45 16"><path d="M5 13.4 H15.4 L19.8 3.3 M19.6 13.4 H29.3 L34.4 3.3 M34 13.4 H45" fill="none" stroke="#f0f0f0" stroke-width="1.3" stroke-linejoin="round"/></svg>
<div class="a" style="left:1.5px;top:449px;width:1918px;height:38px;background:#4b5a73"></div>
<div class="a" style="left:57px;top:449px;width:1px;height:38px;background:#232323"></div>
<div class="a" style="left:125px;top:449px;width:1px;height:38px;background:#232323"></div>
<div class="a" style="left:179px;top:449px;width:1px;height:38px;background:#232323"></div>
<div class="a" style="left:296px;top:449px;width:1px;height:38px;background:#232323"></div>
<div class="a" style="left:382px;top:449px;width:1px;height:38px;background:#232323"></div>
<div class="a" style="left:730px;top:449px;width:1px;height:38px;background:#232323"></div>
<div class="a" style="left:862px;top:449px;width:1px;height:38px;background:#232323"></div>
<div class="a" style="left:944px;top:449px;width:1px;height:38px;background:#232323"></div>
<div class="a" style="left:1043px;top:449px;width:1px;height:38px;background:#232323"></div>
<div class="a" style="left:1237px;top:449px;width:1px;height:38px;background:#232323"></div>
<div class="a" style="left:1351px;top:449px;width:1px;height:38px;background:#232323"></div>
<div class="a" style="left:1621px;top:449px;width:1px;height:38px;background:#232323"></div>
<div class="a" style="left:1860px;top:449px;width:1px;height:38px;background:#232323"></div>
<svg class="a" style="left:14px;top:452px" width="32" height="28" viewBox="0 0 32 28"><path d="M9.1 6.8 V21" stroke="#8c8c8c" stroke-width="2.1"/><path d="M10.2 8.6 Q12.7 6.6 14.5 7.4 Q16.5 8.5 18.4 9.2 Q21 8.6 23.6 8 V16 Q21 17.4 18.4 17.2 Q16.5 16.6 14.5 15.6 Q12.7 15 10.2 17" fill="none" stroke="#8c8c8c" stroke-width="1.1"/><path d="M18.6 9.5 V16.5" stroke="#8c8c8c" stroke-width=".7" opacity=".7"/></svg>
<svg class="a" style="left:84px;top:458.5px" width="16" height="14" viewBox="0 0 16 14"><path d="M2.5 3 H14.5 Q15.5 3 15.5 4 V13.5 H3.5 Q2.5 13.5 2.5 12.5Z" fill="#d8c070"/><path d="M0.5 1 Q0.5 0 1.5 0 H5.5 L7 1.5 H12 Q13 1.5 13 2.5 V11 Q13 12 12 12 H1.5 Q0.5 12 0.5 11 Z" fill="#f0d77e"/></svg>
<svg class="a" style="left:144.7px;top:458.1px" width="14.6" height="15.6" viewBox="0 0 14.6 15.6"><defs><clipPath id="nc5"><rect x="0" y="0" width="14.6" height="15.6" rx="3"/></clipPath></defs><g clip-path="url(#nc5)"><rect x="0" y="0" width="14.6" height="15.6" fill="#f6df7c"/><rect x="0" y="6" width="14.6" height="6.5" fill="#d9ca88"/><path d="M0 7.2H14.6M0 9.6H14.6M0 12H14.6" stroke="#c8b878" stroke-width=".6"/><rect x="0" y="0" width="14.6" height="3.4" fill="#4a4232"/><path d="M2.9 3.4V15.6" stroke="#e85030" stroke-width=".9"/></g></svg>
<div class="a" style="left:188px;top:457px;width:102px;height:22px;border:1.3px dotted #f2f2f2;border-radius:4px"></div>
<div class="t" style="left:192.58px;top:461.00px;font-size:14.008px;color:#fff;">In progress</div>
<div class="t" style="left:306.50px;top:462.00px;font-size:13.500px;color:#fff;">188857</div>
<div class="a" style="left:391px;top:457px;width:310px;height:22px;border:1.3px dotted #f2f2f2;border-radius:4px"></div>
<div class="t" style="left:395.29px;top:462.00px;font-size:13.860px;color:#fff;">Full Speed Ahead</div>
<div class="t" style="left:738.57px;top:461.00px;font-size:14.268px;color:#fff;">Demo orders</div>
<div class="a" style="left:871px;top:460px;width:70px;height:16px;border:1.3px dotted #f2f2f2;border-radius:4px"></div>
<div class="a" style="left:953px;top:457px;width:86px;height:22px;border:1.3px dotted #f2f2f2;border-radius:4px"></div>
<div class="t" style="left:960.00px;top:462.00px;font-size:13.500px;color:#fff;">9</div>
<svg class="a" style="left:1053px;top:458px" width="16" height="16" viewBox="0 0 16 16"><path d="M2 0.5 H10 L13 3.5 V10 H2 Z" fill="#f4f4f4" stroke="#aaa" stroke-width=".5"/><rect x="3.5" y="3" width="6" height="1.3" fill="#e07040"/><path d="M7 9 H9 L10 8 H13 Q15.5 8 15.5 10 V16 H7 Z" fill="#f0d070"/><circle cx="4" cy="11" r="2.2" fill="#e8a870"/><path d="M0 16 Q0 13.3 4 13.3 Q8 13.3 8 16Z" fill="#3a8ad0"/></svg>
<div class="t" style="left:1071.09px;top:462.00px;font-size:13.851px;color:#fff;">Barcelos Broductions</div>
<div class="t" style="left:1244.86px;top:461.00px;font-size:14.336px;color:#fff;">English</div>
<div class="t" style="left:1359.43px;top:462.00px;font-size:13.728px;color:#fff;">2) Arabic,Greek</div>
<div class="a" style="left:1630px;top:457px;width:212px;height:22px;border:1.3px dotted #f2f2f2;border-radius:4px"></div>
<div class="t" style="left:1635.00px;top:461.00px;font-size:14.530px;color:#eee;">Media number</div>
<div class="a" style="left:1869px;top:455.5px;width:80px;height:24px;border:1.3px dotted #f2f2f2;border-radius:8px"></div>
<svg class="a" style="left:1875px;top:461px" width="45" height="16" viewBox="0 0 45 16"><path d="M5 13.4 H15.4 L19.8 3.3 M19.6 13.4 H29.3 L34.4 3.3 M34 13.4 H45" fill="none" stroke="#f0f0f0" stroke-width="1.3" stroke-linejoin="round"/></svg>
<div class="a" style="left:1.5px;top:487px;width:1918px;height:38px;background:#8e8390"></div>
<div class="a" style="left:57px;top:487px;width:1px;height:38px;background:#232323"></div>
<div class="a" style="left:125px;top:487px;width:1px;height:38px;background:#232323"></div>
<div class="a" style="left:179px;top:487px;width:1px;height:38px;background:#232323"></div>
<div class="a" style="left:296px;top:487px;width:1px;height:38px;background:#232323"></div>
<div class="a" style="left:382px;top:487px;width:1px;height:38px;background:#232323"></div>
<div class="a" style="left:730px;top:487px;width:1px;height:38px;background:#232323"></div>
<div class="a" style="left:862px;top:487px;width:1px;height:38px;background:#232323"></div>
<div class="a" style="left:944px;top:487px;width:1px;height:38px;background:#232323"></div>
<div class="a" style="left:1043px;top:487px;width:1px;height:38px;background:#232323"></div>
<div class="a" style="left:1237px;top:487px;width:1px;height:38px;background:#232323"></div>
<div class="a" style="left:1351px;top:487px;width:1px;height:38px;background:#232323"></div>
<div class="a" style="left:1621px;top:487px;width:1px;height:38px;background:#232323"></div>
<div class="a" style="left:1860px;top:487px;width:1px;height:38px;background:#232323"></div>
<svg class="a" style="left:14px;top:490px" width="32" height="28" viewBox="0 0 32 28"><path d="M9.1 6.8 V21" stroke="#878288" stroke-width="2.1"/><path d="M10.2 8.6 Q12.7 6.6 14.5 7.4 Q16.5 8.5 18.4 9.2 Q21 8.6 23.6 8 V16 Q21 17.4 18.4 17.2 Q16.5 16.6 14.5 15.6 Q12.7 15 10.2 17" fill="none" stroke="#878288" stroke-width="1.1"/><path d="M18.6 9.5 V16.5" stroke="#878288" stroke-width=".8"/></svg>
<svg class="a" style="left:80px;top:490px" width="24" height="24" viewBox="0 0 24 24"><path d="M5 8.3 L13.1 5.9 V19.6 L5 21.3 Z" fill="#dedede"/><path d="M13.1 7.6 L15.3 8 V16 L17.7 16.8 V21.5 H5 L13.1 19.6 Z" fill="#d4d4d4"/><path d="M13.1 5.9 V19.6" stroke="#b8b8b8" stroke-width=".6"/><path d="M5 21.4 H17.7" stroke="#6a6a6a" stroke-width=".5"/></svg>
<svg class="a" style="left:144.7px;top:496.1px" width="14.6" height="15.6" viewBox="0 0 14.6 15.6"><defs><clipPath id="nc6"><rect x="0" y="0" width="14.6" height="15.6" rx="3"/></clipPath></defs><g clip-path="url(#nc6)"><rect x="0" y="0" width="14.6" height="15.6" fill="#f6df7c"/><rect x="0" y="6" width="14.6" height="6.5" fill="#d9ca88"/><path d="M0 7.2H14.6M0 9.6H14.6M0 12H14.6" stroke="#c8b878" stroke-width=".6"/><rect x="0" y="0" width="14.6" height="3.4" fill="#4a4232"/><path d="M2.9 3.4V15.6" stroke="#e85030" stroke-width=".9"/></g></svg>
<div class="a" style="left:188px;top:495px;width:102px;height:22px;border:1.3px dotted #f2f2f2;border-radius:4px"></div>
<div class="t" style="left:193.14px;top:499.00px;font-size:14.418px;color:#fff;">New</div>
<div class="t" style="left:306.50px;top:500.00px;font-size:13.500px;color:#fff;">188856</div>
<div class="a" style="left:391px;top:495px;width:310px;height:22px;border:1.3px dotted #f2f2f2;border-radius:4px"></div>
<div class="t" style="left:395.29px;top:500.00px;font-size:13.860px;color:#fff;">Full Speed Ahead</div>
<div class="t" style="left:738.57px;top:499.00px;font-size:14.268px;color:#fff;">Demo orders</div>
<div class="a" style="left:871px;top:498px;width:70px;height:16px;border:1.3px dotted #f2f2f2;border-radius:4px"></div>
<div class="a" style="left:953px;top:495px;width:86px;height:22px;border:1.3px dotted #f2f2f2;border-radius:4px"></div>
<div class="t" style="left:960.00px;top:500.00px;font-size:13.500px;color:#fff;">8</div>
<svg class="a" style="left:1053px;top:496px" width="16" height="16" viewBox="0 0 16 16"><path d="M2 0.5 H10 L13 3.5 V10 H2 Z" fill="#f4f4f4" stroke="#aaa" stroke-width=".5"/><rect x="3.5" y="3" width="6" height="1.3" fill="#e07040"/><path d="M7 9 H9 L10 8 H13 Q15.5 8 15.5 10 V16 H7 Z" fill="#f0d070"/><circle cx="4" cy="11" r="2.2" fill="#e8a870"/><path d="M0 16 Q0 13.3 4 13.3 Q8 13.3 8 16Z" fill="#3a8ad0"/></svg>
<div class="t" style="left:1071.09px;top:500.00px;font-size:13.851px;color:#fff;">Barcelos Broductions</div>
<div class="t" style="left:1244.86px;top:499.00px;font-size:14.336px;color:#fff;">English</div>
<div class="t" style="left:1359.43px;top:500.00px;font-size:13.728px;color:#fff;">2) Arabic,Greek</div>
<div class="a" style="left:1630px;top:495px;width:212px;height:22px;border:1.3px dotted #f2f2f2;border-radius:4px"></div>
<div class="t" style="left:1635.00px;top:499.00px;font-size:14.530px;color:#eee;">Media number</div>
<div class="a" style="left:1869px;top:493.5px;width:80px;height:24px;border:1.3px dotted #f2f2f2;border-radius:8px"></div>
<svg class="a" style="left:1875px;top:499px" width="45" height="16" viewBox="0 0 45 16"><path d="M5 13.4 H15.4 L19.8 3.3 M19.6 13.4 H29.3 L34.4 3.3 M34 13.4 H45" fill="none" stroke="#f0f0f0" stroke-width="1.3" stroke-linejoin="round"/></svg>
<div class="a" style="left:1.5px;top:525px;width:1918px;height:38px;background:#8e8390"></div>
<div class="a" style="left:57px;top:525px;width:1px;height:38px;background:#232323"></div>
<div class="a" style="left:125px;top:525px;width:1px;height:38px;background:#232323"></div>
<div class="a" style="left:179px;top:525px;width:1px;height:38px;background:#232323"></div>
<div class="a" style="left:296px;top:525px;width:1px;height:38px;background:#232323"></div>
<div class="a" style="left:382px;top:525px;width:1px;height:38px;background:#232323"></div>
<div class="a" style="left:730px;top:525px;width:1px;height:38px;background:#232323"></div>
<div class="a" style="left:862px;top:525px;width:1px;height:38px;background:#232323"></div>
<div class="a" style="left:944px;top:525px;width:1px;height:38px;background:#232323"></div>
<div class="a" style="left:1043px;top:525px;width:1px;height:38px;background:#232323"></div>
<div class="a" style="left:1237px;top:525px;width:1px;height:38px;background:#232323"></div>
<div class="a" style="left:1351px;top:525px;width:1px;height:38px;background:#232323"></div>
<div class="a" style="left:1621px;top:525px;width:1px;height:38px;background:#232323"></div>
<div class="a" style="left:1860px;top:525px;width:1px;height:38px;background:#232323"></div>
<svg class="a" style="left:14px;top:528px" width="32" height="28" viewBox="0 0 32 28"><path d="M9.1 6.8 V21" stroke="#878288" stroke-width="2.1"/><path d="M10.2 8.6 Q12.7 6.6 14.5 7.4 Q16.5 8.5 18.4 9.2 Q21 8.6 23.6 8 V16 Q21 17.4 18.4 17.2 Q16.5 16.6 14.5 15.6 Q12.7 15 10.2 17" fill="none" stroke="#878288" stroke-width="1.1"/><path d="M18.6 9.5 V16.5" stroke="#878288" stroke-width=".8"/></svg>
<svg class="a" style="left:80px;top:528px" width="24" height="24" viewBox="0 0 24 24"><path d="M5 8.3 L13.1 5.9 V19.6 L5 21.3 Z" fill="#dedede"/><path d="M13.1 7.6 L15.3 8 V16 L17.7 16.8 V21.5 H5 L13.1 19.6 Z" fill="#d4d4d4"/><path d="M13.1 5.9 V19.6" stroke="#b8b8b8" stroke-width=".6"/><path d="M5 21.4 H17.7" stroke="#6a6a6a" stroke-width=".5"/></svg>
<svg class="a" style="left:144.7px;top:534.1px" width="14.6" height="15.6" viewBox="0 0 14.6 15.6"><defs><clipPath id="nc7"><rect x="0" y="0" width="14.6" height="15.6" rx="3"/></clipPath></defs><g clip-path="url(#nc7)"><rect x="0" y="0" width="14.6" height="15.6" fill="#f6df7c"/><rect x="0" y="6" width="14.6" height="6.5" fill="#d9ca88"/><path d="M0 7.2H14.6M0 9.6H14.6M0 12H14.6" stroke="#c8b878" stroke-width=".6"/><rect x="0" y="0" width="14.6" height="3.4" fill="#4a4232"/><path d="M2.9 3.4V15.6" stroke="#e85030" stroke-width=".9"/></g></svg>
<div class="a" style="left:188px;top:533px;width:102px;height:22px;border:1.3px dotted #f2f2f2;border-radius:4px"></div>
<div class="t" style="left:193.14px;top:537.00px;font-size:14.418px;color:#fff;">New</div>
<div class="t" style="left:306.50px;top:538.00px;font-size:13.500px;color:#fff;">188855</div>
<div class="a" style="left:391px;top:533px;width:310px;height:22px;border:1.3px dotted #f2f2f2;border-radius:4px"></div>
<div class="t" style="left:395.29px;top:538.00px;font-size:13.860px;color:#fff;">Full Speed Ahead</div>
<div class="t" style="left:738.57px;top:537.00px;font-size:14.268px;color:#fff;">Demo orders</div>
<div class="a" style="left:871px;top:536px;width:70px;height:16px;border:1.3px dotted #f2f2f2;border-radius:4px"></div>
<div class="a" style="left:953px;top:533px;width:86px;height:22px;border:1.3px dotted #f2f2f2;border-radius:4px"></div>
<div class="t" style="left:960.00px;top:538.00px;font-size:13.500px;color:#fff;">7</div>
<svg class="a" style="left:1053px;top:534px" width="16" height="16" viewBox="0 0 16 16"><path d="M2 0.5 H10 L13 3.5 V10 H2 Z" fill="#f4f4f4" stroke="#aaa" stroke-width=".5"/><rect x="3.5" y="3" width="6" height="1.3" fill="#e07040"/><path d="M7 9 H9 L10 8 H13 Q15.5 8 15.5 10 V16 H7 Z" fill="#f0d070"/><circle cx="4" cy="11" r="2.2" fill="#e8a870"/><path d="M0 16 Q0 13.3 4 13.3 Q8 13.3 8 16Z" fill="#3a8ad0"/></svg>
<div class="t" style="left:1071.09px;top:538.00px;font-size:13.851px;color:#fff;">Barcelos Broductions</div>
<div class="t" style="left:1244.86px;top:537.00px;font-size:14.336px;color:#fff;">English</div>
<div class="t" style="left:1359.43px;top:538.00px;font-size:13.728px;color:#fff;">2) Arabic,Greek</div>
<div class="a" style="left:1630px;top:533px;width:212px;height:22px;border:1.3px dotted #f2f2f2;border-radius:4px"></div>
<div class="t" style="left:1635.00px;top:537.00px;font-size:14.530px;color:#eee;">Media number</div>
<div class="a" style="left:1869px;top:531.5px;width:80px;height:24px;border:1.3px dotted #f2f2f2;border-radius:8px"></div>
<svg class="a" style="left:1875px;top:537px" width="45" height="16" viewBox="0 0 45 16"><path d="M5 13.4 H15.4 L19.8 3.3 M19.6 13.4 H29.3 L34.4 3.3 M34 13.4 H45" fill="none" stroke="#f0f0f0" stroke-width="1.3" stroke-linejoin="round"/></svg>
<div class="a" style="left:1.5px;top:563px;width:1918px;height:38px;background:#8e8390"></div>
<div class="a" style="left:57px;top:563px;width:1px;height:38px;background:#232323"></div>
<div class="a" style="left:125px;top:563px;width:1px;height:38px;background:#232323"></div>
<div class="a" style="left:179px;top:563px;width:1px;height:38px;background:#232323"></div>
<div class="a" style="left:296px;top:563px;width:1px;height:38px;background:#232323"></div>
<div class="a" style="left:382px;top:563px;width:1px;height:38px;background:#232323"></div>
<div class="a" style="left:730px;top:563px;width:1px;height:38px;background:#232323"></div>
<div class="a" style="left:862px;top:563px;width:1px;height:38px;background:#232323"></div>
<div class="a" style="left:944px;top:563px;width:1px;height:38px;background:#232323"></div>
<div class="a" style="left:1043px;top:563px;width:1px;height:38px;background:#232323"></div>
<div class="a" style="left:1237px;top:563px;width:1px;height:38px;background:#232323"></div>
<div class="a" style="left:1351px;top:563px;width:1px;height:38px;background:#232323"></div>
<div class="a" style="left:1621px;top:563px;width:1px;height:38px;background:#232323"></div>
<div class="a" style="left:1860px;top:563px;width:1px;height:38px;background:#232323"></div>
<svg class="a" style="left:14px;top:566px" width="32" height="28" viewBox="0 0 32 28"><path d="M9.1 6.8 V21" stroke="#878288" stroke-width="2.1"/><path d="M10.2 8.6 Q12.7 6.6 14.5 7.4 Q16.5 8.5 18.4 9.2 Q21 8.6 23.6 8 V16 Q21 17.4 18.4 17.2 Q16.5 16.6 14.5 15.6 Q12.7 15 10.2 17" fill="none" stroke="#878288" stroke-width="1.1"/><path d="M18.6 9.5 V16.5" stroke="#878288" stroke-width=".8"/></svg>
<svg class="a" style="left:80px;top:566px" width="24" height="24" viewBox="0 0 24 24"><path d="M5 8.3 L13.1 5.9 V19.6 L5 21.3 Z" fill="#dedede"/><path d="M13.1 7.6 L15.3 8 V16 L17.7 16.8 V21.5 H5 L13.1 19.6 Z" fill="#d4d4d4"/><path d="M13.1 5.9 V19.6" stroke="#b8b8b8" stroke-width=".6"/><path d="M5 21.4 H17.7" stroke="#6a6a6a" stroke-width=".5"/></svg>
<svg class="a" style="left:144.7px;top:572.1px" width="14.6" height="15.6" viewBox="0 0 14.6 15.6"><defs><clipPath id="nc8"><rect x="0" y="0" width="14.6" height="15.6" rx="3"/></clipPath></defs><g clip-path="url(#nc8)"><rect x="0" y="0" width="14.6" height="15.6" fill="#f6df7c"/><rect x="0" y="6" width="14.6" height="6.5" fill="#d9ca88"/><path d="M0 7.2H14.6M0 9.6H14.6M0 12H14.6" stroke="#c8b878" stroke-width=".6"/><rect x="0" y="0" width="14.6" height="3.4" fill="#4a4232"/><path d="M2.9 3.4V15.6" stroke="#e85030" stroke-width=".9"/></g></svg>
<div class="a" style="left:188px;top:571px;width:102px;height:22px;border:1.3px dotted #f2f2f2;border-radius:4px"></div>
<div class="t" style="left:193.14px;top:575.00px;font-size:14.418px;color:#fff;">New</div>
<div class="t" style="left:306.50px;top:576.00px;font-size:13.500px;color:#fff;">188854</div>
<div class="a" style="left:391px;top:571px;width:310px;height:22px;border:1.3px dotted #f2f2f2;border-radius:4px"></div>
<div class="t" style="left:395.29px;top:576.00px;font-size:13.860px;color:#fff;">Full Speed Ahead</div>
<div class="t" style="left:738.57px;top:575.00px;font-size:14.268px;color:#fff;">Demo orders</div>
<div class="a" style="left:871px;top:574px;width:70px;height:16px;border:1.3px dotted #f2f2f2;border-radius:4px"></div>
<div class="a" style="left:953px;top:571px;width:86px;height:22px;border:1.3px dotted #f2f2f2;border-radius:4px"></div>
<div class="t" style="left:960.00px;top:576.00px;font-size:13.500px;color:#fff;">6</div>
<svg class="a" style="left:1053px;top:572px" width="16" height="16" viewBox="0 0 16 16"><path d="M2 0.5 H10 L13 3.5 V10 H2 Z" fill="#f4f4f4" stroke="#aaa" stroke-width=".5"/><rect x="3.5" y="3" width="6" height="1.3" fill="#e07040"/><path d="M7 9 H9 L10 8 H13 Q15.5 8 15.5 10 V16 H7 Z" fill="#f0d070"/><circle cx="4" cy="11" r="2.2" fill="#e8a870"/><path d="M0 16 Q0 13.3 4 13.3 Q8 13.3 8 16Z" fill="#3a8ad0"/></svg>
<div class="t" style="left:1071.09px;top:576.00px;font-size:13.851px;color:#fff;">Barcelos Broductions</div>
<div class="t" style="left:1244.86px;top:575.00px;font-size:14.336px;color:#fff;">English</div>
<div class="t" style="left:1359.43px;top:576.00px;font-size:13.728px;color:#fff;">2) Arabic,Greek</div>
<div class="a" style="left:1630px;top:571px;width:212px;height:22px;border:1.3px dotted #f2f2f2;border-radius:4px"></div>
<div class="t" style="left:1635.00px;top:575.00px;font-size:14.530px;color:#eee;">Media number</div>
<div class="a" style="left:1869px;top:569.5px;width:80px;height:24px;border:1.3px dotted #f2f2f2;border-radius:8px"></div>
<svg class="a" style="left:1875px;top:575px" width="45" height="16" viewBox="0 0 45 16"><path d="M5 13.4 H15.4 L19.8 3.3 M19.6 13.4 H29.3 L34.4 3.3 M34 13.4 H45" fill="none" stroke="#f0f0f0" stroke-width="1.3" stroke-linejoin="round"/></svg>
<div class="a" style="left:1.5px;top:601px;width:1918px;height:38px;background:#8e8390"></div>
<div class="a" style="left:57px;top:601px;width:1px;height:38px;background:#232323"></div>
<div class="a" style="left:125px;top:601px;width:1px;height:38px;background:#232323"></div>
<div class="a" style="left:179px;top:601px;width:1px;height:38px;background:#232323"></div>
<div class="a" style="left:296px;top:601px;width:1px;height:38px;background:#232323"></div>
<div class="a" style="left:382px;top:601px;width:1px;height:38px;background:#232323"></div>
<div class="a" style="left:730px;top:601px;width:1px;height:38px;background:#232323"></div>
<div class="a" style="left:862px;top:601px;width:1px;height:38px;background:#232323"></div>
<div class="a" style="left:944px;top:601px;width:1px;height:38px;background:#232323"></div>
<div class="a" style="left:1043px;top:601px;width:1px;height:38px;background:#232323"></div>
<div class="a" style="left:1237px;top:601px;width:1px;height:38px;background:#232323"></div>
<div class="a" style="left:1351px;top:601px;width:1px;height:38px;background:#232323"></div>
<div class="a" style="left:1621px;top:601px;width:1px;height:38px;background:#232323"></div>
<div class="a" style="left:1860px;top:601px;width:1px;height:38px;background:#232323"></div>
<svg class="a" style="left:14px;top:604px" width="32" height="28" viewBox="0 0 32 28"><path d="M9.1 6.8 V21" stroke="#878288" stroke-width="2.1"/><path d="M10.2 8.6 Q12.7 6.6 14.5 7.4 Q16.5 8.5 18.4 9.2 Q21 8.6 23.6 8 V16 Q21 17.4 18.4 17.2 Q16.5 16.6 14.5 15.6 Q12.7 15 10.2 17" fill="none" stroke="#878288" stroke-width="1.1"/><path d="M18.6 9.5 V16.5" stroke="#878288" stroke-width=".8"/></svg>
<svg class="a" style="left:80px;top:604px" width="24" height="24" viewBox="0 0 24 24"><path d="M5 8.3 L13.1 5.9 V19.6 L5 21.3 Z" fill="#dedede"/><path d="M13.1 7.6 L15.3 8 V16 L17.7 16.8 V21.5 H5 L13.1 19.6 Z" fill="#d4d4d4"/><path d="M13.1 5.9 V19.6" stroke="#b8b8b8" stroke-width=".6"/><path d="M5 21.4 H17.7" stroke="#6a6a6a" stroke-width=".5"/></svg>
<svg class="a" style="left:144.7px;top:610.1px" width="14.6" height="15.6" viewBox="0 0 14.6 15.6"><defs><clipPath id="nc9"><rect x="0" y="0" width="14.6" height="15.6" rx="3"/></clipPath></defs><g clip-path="url(#nc9)"><rect x="0" y="0" width="14.6" height="15.6" fill="#f6df7c"/><rect x="0" y="6" width="14.6" height="6.5" fill="#d9ca88"/><path d="M0 7.2H14.6M0 9.6H14.6M0 12H14.6" stroke="#c8b878" stroke-width=".6"/><rect x="0" y="0" width="14.6" height="3.4" fill="#4a4232"/><path d="M2.9 3.4V15.6" stroke="#e85030" stroke-width=".9"/></g></svg>
<div class="a" style="left:188px;top:609px;width:102px;height:22px;border:1.3px dotted #f2f2f2;border-radius:4px"></div>
<div class="t" style="left:193.14px;top:613.00px;font-size:14.418px;color:#fff;">New</div>
<div class="t" style="left:306.50px;top:614.00px;font-size:13.500px;color:#fff;">188853</div>
<div class="a" style="left:391px;top:609px;width:310px;height:22px;border:1.3px dotted #f2f2f2;border-radius:4px"></div>
<div class="t" style="left:395.29px;top:614.00px;font-size:13.860px;color:#fff;">Full Speed Ahead</div>
<div class="t" style="left:738.57px;top:613.00px;font-size:14.268px;color:#fff;">Demo orders</div>
<div class="a" style="left:871px;top:612px;width:70px;height:16px;border:1.3px dotted #f2f2f2;border-radius:4px"></div>
<div class="a" style="left:953px;top:609px;width:86px;height:22px;border:1.3px dotted #f2f2f2;border-radius:4px"></div>
<div class="t" style="left:960.00px;top:614.00px;font-size:13.500px;color:#fff;">5</div>
<svg class="a" style="left:1053px;top:610px" width="16" height="16" viewBox="0 0 16 16"><path d="M2 0.5 H10 L13 3.5 V10 H2 Z" fill="#f4f4f4" stroke="#aaa" stroke-width=".5"/><rect x="3.5" y="3" width="6" height="1.3" fill="#e07040"/><path d="M7 9 H9 L10 8 H13 Q15.5 8 15.5 10 V16 H7 Z" fill="#f0d070"/><circle cx="4" cy="11" r="2.2" fill="#e8a870"/><path d="M0 16 Q0 13.3 4 13.3 Q8 13.3 8 16Z" fill="#3a8ad0"/></svg>
<div class="t" style="left:1071.09px;top:614.00px;font-size:13.851px;color:#fff;">Barcelos Broductions</div>
<div class="t" style="left:1244.86px;top:613.00px;font-size:14.336px;color:#fff;">English</div>
<div class="t" style="left:1359.43px;top:614.00px;font-size:13.728px;color:#fff;">2) Arabic,Greek</div>
<div class="a" style="left:1630px;top:609px;width:212px;height:22px;border:1.3px dotted #f2f2f2;border-radius:4px"></div>
<div class="t" style="left:1635.00px;top:613.00px;font-size:14.530px;color:#eee;">Media number</div>
<div class="a" style="left:1869px;top:607.5px;width:80px;height:24px;border:1.3px dotted #f2f2f2;border-radius:8px"></div>
<svg class="a" style="left:1875px;top:613px" width="45" height="16" viewBox="0 0 45 16"><path d="M5 13.4 H15.4 L19.8 3.3 M19.6 13.4 H29.3 L34.4 3.3 M34 13.4 H45" fill="none" stroke="#f0f0f0" stroke-width="1.3" stroke-linejoin="round"/></svg>
<div class="a" style="left:1.5px;top:639px;width:1918px;height:109px;background:#4e4e4e"></div>
<div class="a" style="left:0px;top:639px;width:1.5px;height:109px;background:#2a2a2a"></div>
<div class="a" style="left:1px;top:748px;width:1918px;height:17px;background:#fdfdfd"></div>
<div class="a" style="left:2px;top:749.5px;width:1916px;height:14px;background:#f0f0f0"></div>
<div class="a" style="left:18px;top:750px;width:520px;height:12.8px;background:#c2c2c2"></div>
<svg class="a" style="left:5px;top:752px" width="6" height="9" viewBox="0 0 6 9"><path d="M6 0 V9 L0 4.5Z" fill="#8a8a8a"/></svg>
<svg class="a" style="left:1909px;top:752.8px" width="5" height="8" viewBox="0 0 5 8"><path d="M0 0 V7.5 L4.4 3.75Z" fill="#555"/></svg>
<div class="a" style="left:1919px;top:135px;width:1px;height:630px;background:#262626"></div>
<div class="a" style="left:0px;top:765px;width:1920px;height:39px;background:linear-gradient(#2b2b2b,#3a3a3a 65%,#303030)"></div>
<div class="a" style="left:0px;top:765px;width:2px;height:39px;background:#2a2a2a"></div>
<svg class="a" style="left:8px;top:774px" width="16" height="16" viewBox="0 0 16 16"><circle cx="8" cy="8" r="8" fill="#8cb83c"/><path d="M8 3.5V12.5M3.5 8H12.5" stroke="#fff" stroke-width="2.4"/></svg>
<div class="t" style="left:30.00px;top:780.00px;font-size:12.074px;color:#fff;">Add new order</div>
<svg class="a" style="left:120px;top:774px" width="16" height="16" viewBox="0 0 16 16"><circle cx="8" cy="8" r="8" fill="#8cb83c"/><path d="M8 3.5V12.5M3.5 8H12.5" stroke="#fff" stroke-width="2.4"/></svg>
<div class="t" style="left:140.86px;top:781.00px;font-size:11.956px;color:#fff;">Order wizard</div>
<div class="a" style="left:229px;top:781.5px;width:1.3px;height:9.5px;background:#d8e6f2"></div>
<div class="a" style="left:256px;top:771.6px;width:131px;height:28px;background:#f0a83c;border:1px solid #c0462a;border-radius:4px"></div>
<svg class="a" style="left:269.5px;top:776px" width="18" height="17" viewBox="0 0 18 17"><path d="M0.5 0.5 H14 L9 7 V14 L6 12.5 V7 Z" fill="#8a8a8a"/><rect x="0.5" y="0" width="13.5" height="2" fill="#5bb8e0"/><circle cx="13.5" cy="12.5" r="4" fill="#8cb83c"/><path d="M13.5 10.3V14.7M11.3 12.5H15.7" stroke="#fff" stroke-width="1.2"/></svg>
<div class="t" style="left:294.44px;top:783.00px;font-size:11.861px;color:#111;font-weight:bold;">Range options</div>
<div class="a" style="left:395px;top:772.5px;width:100px;height:26px;background:#f0a83c;border:1px solid #c0462a;border-radius:4px"></div>
<svg class="a" style="left:404px;top:775.3px" width="16" height="16" viewBox="0 0 16 16"><rect x="6.72" y="0.3" width="2.56" height="8.0" fill="#a89070" transform="rotate(0 8.0 8.0)"/><rect x="6.72" y="0.3" width="2.56" height="8.0" fill="#a89070" transform="rotate(36 8.0 8.0)"/><rect x="6.72" y="0.3" width="2.56" height="8.0" fill="#a89070" transform="rotate(72 8.0 8.0)"/><rect x="6.72" y="0.3" width="2.56" height="8.0" fill="#a89070" transform="rotate(108 8.0 8.0)"/><rect x="6.72" y="0.3" width="2.56" height="8.0" fill="#a89070" transform="rotate(144 8.0 8.0)"/><rect x="6.72" y="0.3" width="2.56" height="8.0" fill="#a89070" transform="rotate(180 8.0 8.0)"/><rect x="6.72" y="0.3" width="2.56" height="8.0" fill="#a89070" transform="rotate(216 8.0 8.0)"/><rect x="6.72" y="0.3" width="2.56" height="8.0" fill="#a89070" transform="rotate(252 8.0 8.0)"/><rect x="6.72" y="0.3" width="2.56" height="8.0" fill="#a89070" transform="rotate(288 8.0 8.0)"/><rect x="6.72" y="0.3" width="2.56" height="8.0" fill="#a89070" transform="rotate(324 8.0 8.0)"/><circle cx="8.0" cy="8.0" r="5.92" fill="#a89070"/><circle cx="8.0" cy="8.0" r="4.0" fill="#e0a040"/><circle cx="8.0" cy="8.0" r="1.6" fill="#a89070"/><path d="M8.0 4.0V12.0M4.0 8.0H12.0" stroke="#a89070" stroke-width="1.28"/></svg>
<div class="t" style="left:425.86px;top:782.00px;font-size:11.933px;color:#111;font-weight:bold;">Grid layout</div>
<svg class="a" style="left:506px;top:775px" width="16" height="16" viewBox="0 0 16 16"><rect x="6.72" y="0.3" width="2.56" height="8.0" fill="#999" transform="rotate(0 8.0 8.0)"/><rect x="6.72" y="0.3" width="2.56" height="8.0" fill="#999" transform="rotate(36 8.0 8.0)"/><rect x="6.72" y="0.3" width="2.56" height="8.0" fill="#999" transform="rotate(72 8.0 8.0)"/><rect x="6.72" y="0.3" width="2.56" height="8.0" fill="#999" transform="rotate(108 8.0 8.0)"/><rect x="6.72" y="0.3" width="2.56" height="8.0" fill="#999" transform="rotate(144 8.0 8.0)"/><rect x="6.72" y="0.3" width="2.56" height="8.0" fill="#999" transform="rotate(180 8.0 8.0)"/><rect x="6.72" y="0.3" width="2.56" height="8.0" fill="#999" transform="rotate(216 8.0 8.0)"/><rect x="6.72" y="0.3" width="2.56" height="8.0" fill="#999" transform="rotate(252 8.0 8.0)"/><rect x="6.72" y="0.3" width="2.56" height="8.0" fill="#999" transform="rotate(288 8.0 8.0)"/><rect x="6.72" y="0.3" width="2.56" height="8.0" fill="#999" transform="rotate(324 8.0 8.0)"/><circle cx="8.0" cy="8.0" r="5.92" fill="#999"/><circle cx="8.0" cy="8.0" r="4.0" fill="#2e2e2e"/><circle cx="8.0" cy="8.0" r="1.6" fill="#999"/><path d="M8.0 4.0V12.0M4.0 8.0H12.0" stroke="#999" stroke-width="1.28"/></svg>
<div class="t" style="left:527.00px;top:780.00px;font-size:12.079px;color:#fff;">Settings</div>
<svg class="a" style="left:581px;top:773.5px" width="16" height="16" viewBox="0 0 16 16"><circle cx="8" cy="8" r="8" fill="#8cb050"/><path d="M5.5 4 L12 8 L5.5 12 Z" fill="#fff"/></svg>
<div class="t" style="left:603.14px;top:781.00px;font-size:11.899px;color:#fff;">Generate export</div>
<div class="a" style="left:732px;top:781.5px;width:1.3px;height:9.5px;background:#d8e6f2"></div>
<div class="a" style="left:787px;top:781.5px;width:1.3px;height:9.5px;background:#d8e6f2"></div>
<svg class="a" style="left:817px;top:773px" width="17" height="17" viewBox="0 0 17 17"><path d="M4 12 L12 4 Q15 6 14 9 L8 15 Q5 15 4 12Z" fill="#8cc04a"/><path d="M1 16 L5 12M13 4 L16.5 0.5" stroke="#8cc04a" stroke-width="1.5"/><path d="M6 9.5 L10 13.5" stroke="#5a9030" stroke-width=".8"/></svg>
<div class="t" style="left:837.22px;top:781.00px;font-size:11.958px;color:#fff;">Connect all</div>
<svg class="a" style="left:916px;top:773px" width="14" height="17" viewBox="0 0 14 17"><path d="M0.5 3 L6 0.5 V13.5 L0.5 16.5 Z" fill="#e8d080"/><path d="M6 0.5 L8 2 V14 L6 13.5Z" fill="#c8b060"/><path d="M8 10 H13.5 V16.5 H0.5 L8 14Z" fill="#e0c878"/></svg>
<div class="t" style="left:936.85px;top:780.00px;font-size:12.185px;color:#fff;">Upload to Orders</div>
<svg class="a" style="left:1049px;top:773px" width="14" height="17" viewBox="0 0 14 17"><path d="M0.5 3 L6 0.5 V13.5 L0.5 16.5 Z" fill="#e8d080"/><path d="M6 0.5 L8 2 V14 L6 13.5Z" fill="#c8b060"/><path d="M8 10 H13.5 V16.5 H0.5 L8 14Z" fill="#e0c878"/></svg>
<div class="t" style="left:1069.79px;top:780.00px;font-size:12.134px;color:#fff;">Upload streaming folders</div>
<svg class="a" style="left:1223px;top:776px" width="17" height="15" viewBox="0 0 17 15"><rect x="0.5" y="0.5" width="14" height="10" fill="#fff" stroke="#999" stroke-width=".8"/><path d="M0.5 0.5 L7.5 6 L14.5 0.5" fill="none" stroke="#888" stroke-width=".8"/><circle cx="12" cy="10.5" r="4.5" fill="#5cb85c"/><path d="M9.5 10.5 H14 M12 8.5 L14 10.5 L12 12.5" stroke="#fff" stroke-width="1.2" fill="none"/></svg>
<div class="t" style="left:1244.00px;top:780.00px;font-size:12.036px;color:#fff;">Send assignment notifications</div>
<svg class="a" style="left:1415.5px;top:774.5px" width="12" height="15" viewBox="0 0 12 15"><rect x="0" y="0" width="12" height="15" fill="#555"/><rect x="1" y="1" width="10" height="3" fill="#ddd"/><g fill="#fff"><rect x="1" y="6" width="2.5" height="2"/><rect x="4.8" y="6" width="2.5" height="2"/><rect x="1" y="9.5" width="2.5" height="2"/><rect x="4.8" y="9.5" width="2.5" height="2"/><rect x="1" y="13" width="2.5" height="1.5"/><rect x="4.8" y="13" width="2.5" height="1.5"/></g><rect x="8.5" y="6" width="2.5" height="8.5" fill="#5bb8e0"/></svg>
<div class="t" style="left:1435.85px;top:781.00px;font-size:11.444px;color:#fff;">Recalculate</div>
<svg class="a" style="left:1505.5px;top:773.5px" width="17" height="17" viewBox="0 0 17 17"><circle cx="3" cy="3" r="3" fill="#8cb83c"/><rect x="7" y="2" width="4" height="1.5" fill="#ddd"/><rect x="12" y="0.5" width="5" height="4" fill="#ddd"/><rect x="1.5" y="7" width="3" height="4" fill="#3a8ad0"/><rect x="7" y="8" width="4" height="1.5" fill="#ddd"/><rect x="12" y="7" width="5" height="3" fill="#aaa"/><circle cx="3" cy="14" r="3" fill="#e07050"/><rect x="7" y="13" width="10" height="1.5" fill="#ddd"/></svg>
<div class="t" style="left:1528.92px;top:780.00px;font-size:12.037px;color:#fff;">Apply automatic assignment</div>
<div class="a" style="left:0px;top:804px;width:1920px;height:36px;background:linear-gradient(#282828,#3b3b3b 50%,#383838)"></div>
<div class="a" style="left:0px;top:804px;width:2px;height:36px;background:#2a2a2a"></div>
<div class="a" style="left:1918px;top:804px;width:2px;height:36px;background:#2a2a2a"></div>
<svg class="a" style="left:13.5px;top:818.8px" width="8" height="8" viewBox="0 0 8 8"><rect x="0" y="0" width="1.6" height="8" fill="#999"/><path d="M8 0 V8 L2 4Z" fill="#999"/></svg>
<svg class="a" style="left:45px;top:818.8px" width="7" height="8" viewBox="0 0 7 8"><path d="M6.5 0 V8 L0.5 4Z" fill="#999"/></svg>
<div class="a" style="left:63px;top:808px;width:30px;height:30px;background:#5a5a5a"></div>
<div class="t" style="left:73.50px;top:817.00px;font-size:13.000px;color:#eee;">1</div>
<svg class="a" style="left:104px;top:818.8px" width="7" height="8" viewBox="0 0 7 8"><path d="M0.5 0 V8 L6.5 4Z" fill="#999"/></svg>
<svg class="a" style="left:134px;top:818.8px" width="8" height="8" viewBox="0 0 8 8"><path d="M0 0 V8 L6 4Z" fill="#999"/><rect x="6.4" y="0" width="1.6" height="8" fill="#999"/></svg>
<div class="t" style="left:166.43px;top:818.00px;font-size:11.296px;color:#fff;">Page</div>
<div class="a" style="left:201px;top:809px;width:68px;height:28px;background:#fff;border-radius:3px"></div>
<div class="t" style="left:209.60px;top:817.00px;font-size:13.000px;color:#111;">1</div>
<div class="t" style="left:276.38px;top:817.00px;font-size:12.784px;color:#fff;">of 1</div>
<div class="a" style="left:312px;top:809px;width:43px;height:28px;background:#fff;border-radius:3px 0 0 3px"></div>
<div class="a" style="left:355px;top:809px;width:25px;height:28px;background:linear-gradient(#2f2f2f,#252525);border-radius:0 3px 3px 0"></div>
<svg class="a" style="left:363.5px;top:820px" width="8" height="6" viewBox="0 0 8 6"><path d="M0 0 H8 L4.0 6 Z" fill="#fff"/></svg>
<div class="t" style="left:321.00px;top:818.00px;font-size:12.545px;color:#111;">20</div>
<div class="t" style="left:388.14px;top:817.00px;font-size:12.097px;color:#fff;">items per page</div>
<div class="t" style="left:1784.28px;top:817.00px;font-size:12.068px;color:#fff;">1 - 10 of 10 items</div>
<div class="a" style="left:1891px;top:810.3px;width:26px;height:25.5px;background:#2a2a2a;border-radius:9px"></div>
<svg class="a" style="left:1896px;top:815px" width="16" height="16" viewBox="0 0 16 16"><path d="M13 8 A5.5 5.5 0 1 1 9.5 2.8" fill="none" stroke="#fff" stroke-width="2.2"/><path d="M8 0 L13.5 3 L8.5 6.5Z" fill="#fff"/></svg>
<div class="a" style="left:0px;top:840px;width:1920px;height:76px;background:#272523"></div>
<div class="a" style="left:0px;top:840px;width:2px;height:76px;background:#2c2c2c"></div>
<div class="a" style="left:15.6px;top:863px;width:110px;height:32.5px;background:linear-gradient(#353535,#262626);border-radius:4px"></div>
<svg class="a" style="left:23px;top:866.5px" width="26" height="25" viewBox="0 0 26 25"><path d="M4 4 L22 21 M22 4 L4 21" stroke="#f0b040" stroke-width="1.5" stroke-dasharray="2 1.5"/><path d="M8 17 L18 8" stroke="#5bb8e0" stroke-width="1.5"/><circle cx="13" cy="12.5" r="5" fill="#888"/><circle cx="13" cy="12.5" r="2.5" fill="#555"/><circle cx="3.5" cy="3" r="3" fill="#8cb83c"/><path d="M20 0.5 L25 5.5 M25 0.5 L20 5.5" stroke="#c03020" stroke-width="1.6"/><rect x="1" y="19" width="4" height="6" fill="#eee"/><path d="M20 24 L25 18" stroke="#f09040" stroke-width="2.5"/></svg>
<div class="t" style="left:53.29px;top:875.00px;font-size:11.854px;color:#fff;">Bulk actions</div>
<div class="t" style="left:130.86px;top:875.00px;font-size:11.953px;color:#fff;">Change status to</div>
<div class="a" style="left:246px;top:864px;width:153px;height:30px;background:#fff;border-radius:3px 0 0 3px"></div>
<div class="a" style="left:399px;top:864px;width:25px;height:30px;background:linear-gradient(#393939,#262626);border-radius:0 3px 3px 0"></div>
<svg class="a" style="left:407.5px;top:875.8px" width="9" height="7" viewBox="0 0 9 7"><path d="M0 0 H9 L4.5 7 Z" fill="#fff"/></svg>
<div class="t" style="left:253.00px;top:872.00px;font-size:15.191px;color:#111;">Select status...</div>
<div class="a" style="left:430px;top:863.3px;width:46px;height:31px;background:linear-gradient(#2e2e2e,#252525);border-radius:3px"></div>
<div class="t" style="left:436.17px;top:873.00px;font-size:13.265px;color:#9a9a9a;">Apply</div>
<div class="t" style="left:489.86px;top:874.00px;font-size:12.124px;color:#fff;">Change flag to</div>
<div class="a" style="left:593px;top:864px;width:133px;height:30px;background:#fff;border-radius:3px 0 0 3px"></div>
<div class="a" style="left:726px;top:864px;width:25px;height:30px;background:linear-gradient(#393939,#262626);border-radius:0 3px 3px 0"></div>
<svg class="a" style="left:734.5px;top:875.8px" width="9" height="7" viewBox="0 0 9 7"><path d="M0 0 H9 L4.5 7 Z" fill="#fff"/></svg>
<div class="t" style="left:601.28px;top:872.00px;font-size:15.182px;color:#111;">Select flag...</div>
<div class="a" style="left:757px;top:863.3px;width:46.5px;height:31px;background:linear-gradient(#2e2e2e,#252525);border-radius:3px"></div>
<div class="t" style="left:764.43px;top:873.00px;font-size:13.529px;color:#9a9a9a;">Apply</div>
<div class="a" style="left:818.5px;top:856px;width:338.5px;height:45.5px;background:#4a4a4a"></div>
<div class="a" style="left:818.5px;top:856px;width:71px;height:45.5px;background:linear-gradient(#2a2a2a,#3a3a3a 50%,#2e2e2e)"></div>
<div class="t" style="left:821.72px;top:875.00px;font-size:12.065px;color:#fff;">Update date</div>
<div class="a" style="left:916px;top:862px;width:148px;height:34px;background:#fff;border-radius:3px 0 0 3px"></div>
<div class="a" style="left:1064px;top:862px;width:50.5px;height:34px;background:#2e2e2e;border-radius:0 3px 3px 0"></div>
<div class="a" style="left:1089px;top:862px;width:1px;height:34px;background:#3a3a3a"></div>
<svg class="a" style="left:1069.5px;top:870px" width="15" height="15" viewBox="0 0 15 15"><rect x="0.8" y="2" width="13.4" height="12.2" fill="none" stroke="#fff" stroke-width="1.3"/><path d="M0.8 5H14.2" stroke="#fff" stroke-width="1.3"/><path d="M4 0V3.5M11 0V3.5" stroke="#fff" stroke-width="1.3"/><rect x="8.5" y="9" width="4" height="4" fill="#fff"/></svg>
<svg class="a" style="left:1094.5px;top:870px" width="15" height="15" viewBox="0 0 15 15"><circle cx="7.5" cy="7.5" r="6.6" fill="none" stroke="#fff" stroke-width="1.2"/><path d="M7.5 3.5V7.8H11" fill="none" stroke="#fff" stroke-width="1.2"/></svg>
<div class="a" style="left:1116.5px;top:863px;width:31.5px;height:30px;background:linear-gradient(#393939,#262626);border-radius:3px 12px 12px 3px"></div>
<svg class="a" style="left:1124px;top:870px" width="15" height="15" viewBox="0 0 15 15"><rect x="6.3" y="0.3" width="2.4" height="7.5" fill="#555" transform="rotate(0 7.5 7.5)"/><rect x="6.3" y="0.3" width="2.4" height="7.5" fill="#555" transform="rotate(36 7.5 7.5)"/><rect x="6.3" y="0.3" width="2.4" height="7.5" fill="#555" transform="rotate(72 7.5 7.5)"/><rect x="6.3" y="0.3" width="2.4" height="7.5" fill="#555" transform="rotate(108 7.5 7.5)"/><rect x="6.3" y="0.3" width="2.4" height="7.5" fill="#555" transform="rotate(144 7.5 7.5)"/><rect x="6.3" y="0.3" width="2.4" height="7.5" fill="#555" transform="rotate(180 7.5 7.5)"/><rect x="6.3" y="0.3" width="2.4" height="7.5" fill="#555" transform="rotate(216 7.5 7.5)"/><rect x="6.3" y="0.3" width="2.4" height="7.5" fill="#555" transform="rotate(252 7.5 7.5)"/><rect x="6.3" y="0.3" width="2.4" height="7.5" fill="#555" transform="rotate(288 7.5 7.5)"/><rect x="6.3" y="0.3" width="2.4" height="7.5" fill="#555" transform="rotate(324 7.5 7.5)"/><circle cx="7.5" cy="7.5" r="5.55" fill="#555"/><circle cx="7.5" cy="7.5" r="3.75" fill="#333"/><circle cx="7.5" cy="7.5" r="1.5" fill="#555"/><path d="M7.5 3.75V11.25M3.75 7.5H11.25" stroke="#555" stroke-width="1.2"/></svg>
<div class="a" style="left:1162.75px;top:857px;width:225.5px;height:43px;background:#4a4a4a"></div>
<div class="a" style="left:1162.75px;top:857px;width:66px;height:43px;background:linear-gradient(#2a2a2a,#3a3a3a 50%,#2e2e2e)"></div>
<div class="t" style="left:1165.43px;top:864.00px;font-size:12.210px;color:#fff;">Edit mode:</div>
<div class="t" style="left:1171.71px;top:882.00px;font-size:11.716px;color:#fff;font-weight:bold;">click cell</div>
<div class="a" style="left:1230px;top:862px;width:38px;height:34px;background:linear-gradient(#3a3a3a,#222);border-radius:5px"></div>
<svg class="a" style="left:1241px;top:871px" width="16" height="16" viewBox="0 0 16 16"><rect x="0.0" y="0.0" width="4.8" height="4.8" fill="#fff"/><rect x="5.5" y="0.0" width="4.8" height="4.8" fill="#fff"/><rect x="11.0" y="0.0" width="4.8" height="4.8" fill="#fff"/><rect x="0.0" y="5.5" width="4.8" height="4.8" fill="#fff"/><rect x="5.5" y="5.5" width="4.8" height="4.8" fill="#fff"/><rect x="11.0" y="5.5" width="4.8" height="4.8" fill="#fff"/><rect x="0.0" y="11.0" width="4.8" height="4.8" fill="#fff"/><rect x="5.5" y="11.0" width="4.8" height="4.8" fill="#fff"/><rect x="11.0" y="11.0" width="4.8" height="4.8" fill="#fff"/></svg>
<div class="a" style="left:1270px;top:862px;width:38px;height:34px;background:linear-gradient(#3a3a3a,#222);border-radius:5px"></div>
<svg class="a" style="left:1281px;top:871px" width="16" height="16" viewBox="0 0 16 16"><rect x="0.0" y="0.0" width="4.8" height="4.8" fill="#fff"/><rect x="5.5" y="0.0" width="4.8" height="4.8" fill="#fff"/><rect x="11.0" y="0.0" width="4.8" height="4.8" fill="#fff"/><rect x="0.0" y="5.5" width="4.8" height="4.8" fill="#fff"/><rect x="5.5" y="5.5" width="4.8" height="4.8" fill="#5ab0f0"/><rect x="11.0" y="5.5" width="4.8" height="4.8" fill="#fff"/><rect x="0.0" y="11.0" width="4.8" height="4.8" fill="#fff"/><rect x="5.5" y="11.0" width="4.8" height="4.8" fill="#fff"/><rect x="11.0" y="11.0" width="4.8" height="4.8" fill="#fff"/><path d="M8 8 L8 15 L10 13 L12 16 L13.5 15 L11.5 12 L14 12 Z" fill="#eee" stroke="#333" stroke-width=".6"/></svg>
<div class="a" style="left:1310px;top:862px;width:38px;height:34px;background:linear-gradient(#3d7ad8,#2a62c8);border:1px solid #6a9ee8;border-radius:5px"></div>
<svg class="a" style="left:1321px;top:871px" width="16" height="16" viewBox="0 0 16 16"><rect x="0.0" y="0.0" width="4.8" height="4.8" fill="#fff"/><rect x="5.5" y="0.0" width="4.8" height="4.8" fill="#fff"/><rect x="11.0" y="0.0" width="4.8" height="4.8" fill="#fff"/><rect x="0.0" y="5.5" width="4.8" height="4.8" fill="#fff"/><rect x="5.5" y="5.5" width="4.8" height="4.8" fill="#5ab0f0"/><rect x="11.0" y="5.5" width="4.8" height="4.8" fill="#fff"/><rect x="0.0" y="11.0" width="4.8" height="4.8" fill="#fff"/><rect x="5.5" y="11.0" width="4.8" height="4.8" fill="#fff"/><rect x="11.0" y="11.0" width="4.8" height="4.8" fill="#fff"/></svg>
<div class="a" style="left:1350px;top:862px;width:38px;height:34px;background:linear-gradient(#3a3a3a,#222);border-radius:5px"></div>
<svg class="a" style="left:1356px;top:866px" width="26" height="26" viewBox="0 0 26 26"><path d="M5.5 16.5 L11.5 22.5 L23 11" fill="none" stroke="#a8a8a8" stroke-width="3.4"/><path d="M8 12 L11.5 15.5 L20 6.5" fill="none" stroke="#cfcfcf" stroke-width="3.2"/></svg>
<div class="a" style="left:1389px;top:846px;width:228px;height:69px;border:5.2px solid #1fa22e;background:#222"></div>
<div class="a" style="left:1399px;top:857.5px;width:204px;height:42.5px;background:#4a4a4a"></div>
<div class="a" style="left:1399px;top:857.5px;width:84px;height:42.5px;background:linear-gradient(#2a2a2a,#3a3a3a 50%,#2e2e2e)"></div>
<div class="t" style="left:1402.14px;top:865.00px;font-size:11.886px;color:#fff;">Display mode:</div>
<div class="t" style="left:1431.58px;top:882.00px;font-size:12.947px;color:#fff;font-weight:bold;">full</div>
<div class="a" style="left:1484.2px;top:862px;width:38px;height:34px;background:linear-gradient(#3d7ad8,#2a62c8);border:1px solid #6a9ee8;border-radius:5px"></div>
<div class="a" style="left:1524.3px;top:862px;width:38px;height:34px;background:linear-gradient(#3a3a3a,#222);border-radius:5px"></div>
<div class="a" style="left:1564.2px;top:862px;width:38px;height:34px;background:linear-gradient(#3a3a3a,#222);border-radius:5px"></div>
<svg class="a" style="left:1495.2px;top:871px" width="17" height="17" viewBox="0 0 17 17"><rect x="0" y="1.60" width="16" height="1.3" fill="#8a8a8a"/><rect x="1.7" y="0.20" width="6" height="4" rx="1.2" fill="#7acc40"/><rect x="3.3" y="1.30" width="0.8" height="1.8" fill="#fff" opacity=".5"/><rect x="5.3" y="1.30" width="0.8" height="1.8" fill="#fff" opacity=".5"/><rect x="0" y="7.35" width="16" height="1.3" fill="#8a8a8a"/><rect x="1.7" y="5.95" width="6" height="4" rx="1.2" fill="#7acc40"/><rect x="3.3" y="7.05" width="0.8" height="1.8" fill="#fff" opacity=".5"/><rect x="5.3" y="7.05" width="0.8" height="1.8" fill="#fff" opacity=".5"/><rect x="0" y="13.10" width="16" height="1.3" fill="#8a8a8a"/><rect x="1.7" y="11.70" width="6" height="4" rx="1.2" fill="#7acc40"/><rect x="3.3" y="12.80" width="0.8" height="1.8" fill="#fff" opacity=".5"/><rect x="5.3" y="12.80" width="0.8" height="1.8" fill="#fff" opacity=".5"/></svg>
<svg class="a" style="left:1535px;top:871px" width="17" height="17" viewBox="0 0 17 17"><rect x="0" y="1.60" width="16" height="1.3" fill="#8a8a8a"/><rect x="8.4" y="0.20" width="6" height="4" rx="1.2" fill="#d83838"/><rect x="10.0" y="1.30" width="0.8" height="1.8" fill="#fff" opacity=".5"/><rect x="12.0" y="1.30" width="0.8" height="1.8" fill="#fff" opacity=".5"/><rect x="0" y="7.35" width="16" height="1.3" fill="#8a8a8a"/><rect x="8.4" y="5.95" width="6" height="4" rx="1.2" fill="#d83838"/><rect x="10.0" y="7.05" width="0.8" height="1.8" fill="#fff" opacity=".5"/><rect x="12.0" y="7.05" width="0.8" height="1.8" fill="#fff" opacity=".5"/><rect x="0" y="13.10" width="16" height="1.3" fill="#8a8a8a"/><rect x="8.4" y="11.70" width="6" height="4" rx="1.2" fill="#d83838"/><rect x="10.0" y="12.80" width="0.8" height="1.8" fill="#fff" opacity=".5"/><rect x="12.0" y="12.80" width="0.8" height="1.8" fill="#fff" opacity=".5"/></svg>
<svg class="a" style="left:1575px;top:871px" width="17" height="17" viewBox="0 0 17 17"><rect x="0" y="1.60" width="16" height="1.3" fill="#8a8a8a"/><rect x="8.4" y="0.20" width="6" height="4" rx="1.2" fill="#f2c040"/><rect x="10.0" y="1.30" width="0.8" height="1.8" fill="#fff" opacity=".5"/><rect x="12.0" y="1.30" width="0.8" height="1.8" fill="#fff" opacity=".5"/><rect x="0" y="7.35" width="16" height="1.3" fill="#8a8a8a"/><rect x="1.9" y="5.95" width="6" height="4" rx="1.2" fill="#5bc0f0"/><rect x="3.5" y="7.05" width="0.8" height="1.8" fill="#fff" opacity=".5"/><rect x="5.5" y="7.05" width="0.8" height="1.8" fill="#fff" opacity=".5"/><rect x="0" y="13.10" width="16" height="1.3" fill="#8a8a8a"/><rect x="8.4" y="11.70" width="6" height="4" rx="1.2" fill="#f2c040"/><rect x="10.0" y="12.80" width="0.8" height="1.8" fill="#fff" opacity=".5"/><rect x="12.0" y="12.80" width="0.8" height="1.8" fill="#fff" opacity=".5"/></svg>
<div class="t" style="left:837.2px;top:933.5px;font-size:9.9px;color:#fff;line-height:1;font-family:'Liberation Sans',sans-serif">Copyright &copy; 2012 <span style="color:#999;font-style:italic">O</span><span style="color:#d8b838;font-style:italic">O</span><span style="color:#5bb8e0">O</span><span style="color:#888">NA.NET</span> ltd. All rights reserved.</div></body></html>
